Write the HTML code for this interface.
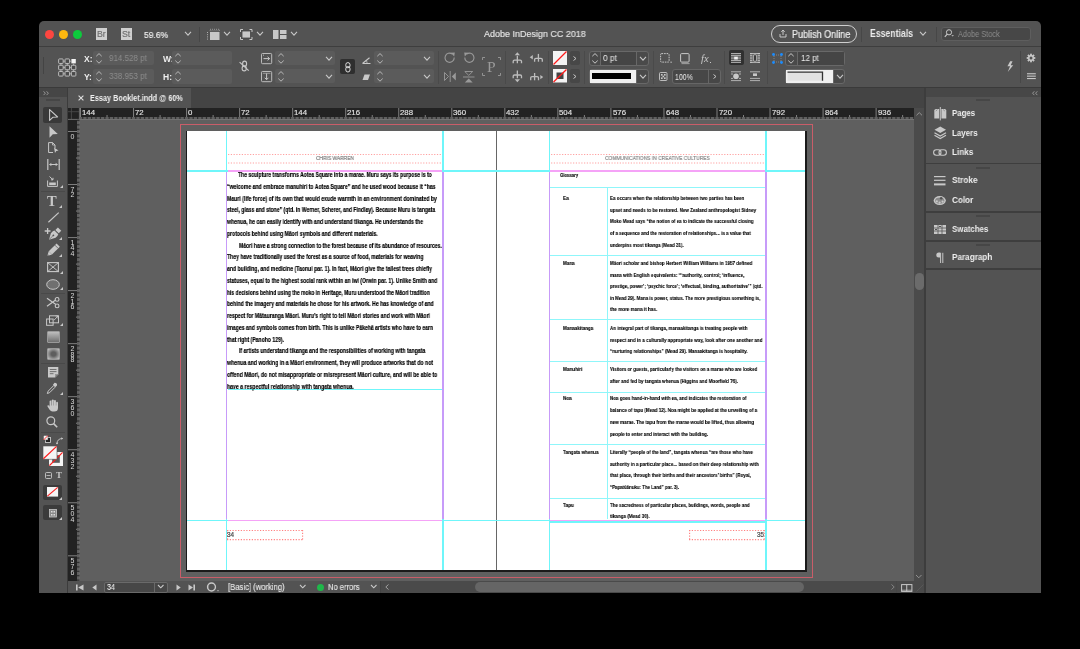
<!DOCTYPE html><html><head><meta charset="utf-8"><style>
html,body{margin:0;padding:0;background:#000;width:1080px;height:649px;overflow:hidden;font-family:'Liberation Sans',sans-serif}
.t{position:absolute;white-space:nowrap;will-change:transform;font-family:'Liberation Sans',sans-serif}
svg{overflow:visible}
</style></head><body>
<div style="position:absolute;left:39px;top:21px;width:1002px;height:572px;background:#535353;border-radius:5px 5px 0 0;"></div>
<div style="position:absolute;left:39px;top:46px;width:1002px;height:1px;background:#3e3e3e;"></div>
<div style="position:absolute;left:39px;top:87px;width:1002px;height:1px;background:#3a3a3a;"></div>
<div style="position:absolute;left:68px;top:88px;width:858px;height:20px;background:#444444;"></div>
<div style="position:absolute;left:68px;top:88px;width:123px;height:20px;background:#535353;"></div>
<div style="position:absolute;left:39px;top:88px;width:28px;height:505px;background:#535353;"></div>
<div style="position:absolute;left:39px;top:88px;width:28px;height:9px;background:#464646;"></div>
<div style="position:absolute;left:67px;top:88px;width:1px;height:505px;background:#3c3c3c;"></div>
<div style="position:absolute;left:68px;top:108px;width:846px;height:11px;background:#222222;"></div>
<div style="position:absolute;left:68px;top:119px;width:12px;height:462px;background:#222222;"></div>
<div style="position:absolute;left:80px;top:119px;width:834px;height:462px;background:#5f5f5f;"></div>
<div style="position:absolute;left:914px;top:108px;width:10px;height:473px;background:#4b4b4b;"></div>
<div style="position:absolute;left:924px;top:88px;width:2px;height:505px;background:#3d3d3d;"></div>
<div style="position:absolute;left:926px;top:88px;width:115px;height:9px;background:#474747;"></div>
<div style="position:absolute;left:68px;top:581px;width:313px;height:12px;background:#535353;"></div>
<div style="position:absolute;left:381px;top:581px;width:533px;height:12px;background:#4a4a4a;"></div>
<div style="position:absolute;left:914px;top:581px;width:10px;height:12px;background:#4a4a4a;"></div>
<div style="position:absolute;left:44.699999999999996px;top:30.1px;width:9.2px;height:9.2px;border-radius:50%;background:#fd4640;"></div>
<div style="position:absolute;left:58.8px;top:30.1px;width:9.2px;height:9.2px;border-radius:50%;background:#fdb810;"></div>
<div style="position:absolute;left:72.5px;top:30.1px;width:9.2px;height:9.2px;border-radius:50%;background:#0ccb3c;"></div>
<div style="position:absolute;left:95.8px;top:28.1px;width:11.4px;height:11.7px;background:#cfcfcf;"></div>
<div class="t " style="left:97.0px;top:30.15px;font-size:8.8px;line-height:8.8px;color:#6e6e6e;font-weight:normal;font-family:'Liberation Sans',sans-serif;-webkit-text-stroke:0.15px #6e6e6e;">Br</div>
<div style="position:absolute;left:120.9px;top:28.1px;width:11.4px;height:11.7px;background:#cfcfcf;"></div>
<div class="t " style="left:122.10000000000001px;top:30.15px;font-size:8.8px;line-height:8.8px;color:#6e6e6e;font-weight:normal;font-family:'Liberation Sans',sans-serif;-webkit-text-stroke:0.15px #6e6e6e;">St</div>
<div id="f0" class="t" style="left:144.2px;top:30.42px;font-size:9.9px;line-height:9.9px;color:#ececec;font-weight:normal;font-family:'Liberation Sans',sans-serif;transform:scaleX(0.8602);transform-origin:0 0;-webkit-text-stroke:0.2px #ececec;">59.6%</div>
<svg style="position:absolute;left:184.0px;top:31.1px;" width="8" height="5.2" viewBox="0 0 8 5.2"><polyline points="1,1 4.0,4.2 7,1" fill="none" stroke="#c8c8c8" stroke-width="1.1"/></svg>
<div style="position:absolute;left:199px;top:27px;width:1px;height:15px;background:#474747;"></div>
<svg style="position:absolute;left:206px;top:28.7px;" width="14" height="11" viewBox="0 0 14 11"><rect x="4" y="3" width="9.5" height="8" fill="#c8c8c8"/><rect x="4" y="0.3" width="9.5" height="1.5" fill="none" stroke="#c8c8c8" stroke-width="0.6" stroke-dasharray="1 1"/><line x1="1.5" y1="3" x2="1.5" y2="11" stroke="#c8c8c8" stroke-width="0.8" stroke-dasharray="1 1.2"/></svg>
<svg style="position:absolute;left:223.3px;top:31.1px;" width="8" height="5.2" viewBox="0 0 8 5.2"><polyline points="1,1 4.0,4.2 7,1" fill="none" stroke="#c8c8c8" stroke-width="1.1"/></svg>
<svg style="position:absolute;left:240px;top:28.7px;" width="12.5" height="11" viewBox="0 0 12.5 11"><rect x="2" y="2" width="8.5" height="7" fill="#c8c8c8" stroke="#444" stroke-width="0.8"/><path d="M0.5 3V0.5H3M9.5 0.5H12V3M12 8V10.5H9.5M3 10.5H0.5V8" fill="none" stroke="#c8c8c8" stroke-width="1"/></svg>
<svg style="position:absolute;left:256.4px;top:31.1px;" width="8" height="5.2" viewBox="0 0 8 5.2"><polyline points="1,1 4.0,4.2 7,1" fill="none" stroke="#c8c8c8" stroke-width="1.1"/></svg>
<svg style="position:absolute;left:272.7px;top:29.6px;" width="13.5" height="9" viewBox="0 0 13.5 9"><rect x="0" y="0" width="5.5" height="9" fill="#c8c8c8"/><rect x="7" y="0" width="6.5" height="4" fill="#c8c8c8"/><rect x="7" y="5" width="6.5" height="4" fill="#c8c8c8"/></svg>
<svg style="position:absolute;left:290.3px;top:31.1px;" width="8" height="5.2" viewBox="0 0 8 5.2"><polyline points="1,1 4.0,4.2 7,1" fill="none" stroke="#c8c8c8" stroke-width="1.1"/></svg>
<div id="f1" class="t" style="left:484.3px;top:29.98px;font-size:9px;line-height:9px;color:#e4e4e4;font-weight:normal;font-family:'Liberation Sans',sans-serif;transform:scaleX(0.9973);transform-origin:0 0;-webkit-text-stroke:0.15px #e4e4e4;">Adobe InDesign CC 2018</div>
<div style="position:absolute;left:771.3px;top:24.7px;width:83.4px;height:16.3px;border:1px solid #cfcfcf;border-radius:9px;"></div>
<svg style="position:absolute;left:779px;top:29px;" width="8" height="9" viewBox="0 0 8 9"><path d="M1 5V8H7V5" fill="none" stroke="#c8c8c8" stroke-width="1"/><path d="M4 6V1M2.3 2.8L4 1L5.7 2.8" fill="none" stroke="#c8c8c8" stroke-width="1"/></svg>
<div id="f2" class="t" style="left:791.7px;top:29.93px;font-size:10px;line-height:10px;color:#ececec;font-weight:normal;font-family:'Liberation Sans',sans-serif;transform:scaleX(0.9041);transform-origin:0 0;-webkit-text-stroke:0.2px #ececec;">Publish Online</div>
<div style="position:absolute;left:860.5px;top:27px;width:1px;height:15px;background:#474747;"></div>
<div id="f3" class="t" style="left:870px;top:29.43px;font-size:10px;line-height:10px;color:#ececec;font-weight:bold;font-family:'Liberation Sans',sans-serif;transform:scaleX(0.8690);transform-origin:0 0;">Essentials</div>
<svg style="position:absolute;left:918.5px;top:31.1px;" width="8" height="5.2" viewBox="0 0 8 5.2"><polyline points="1,1 4.0,4.2 7,1" fill="none" stroke="#c8c8c8" stroke-width="1.1"/></svg>
<div style="position:absolute;left:935.5px;top:27px;width:1px;height:15px;background:#474747;"></div>
<div style="position:absolute;left:940.6px;top:27.4px;width:88px;height:11.4px;background:#474747;border:1px solid #5e5e5e;border-radius:3px;"></div>
<svg style="position:absolute;left:944px;top:29px;" width="10" height="9" viewBox="0 0 10 9"><circle cx="5" cy="3.3" r="2.6" fill="none" stroke="#c8c8c8" stroke-width="1"/><line x1="3.2" y1="5.2" x2="0.8" y2="7.8" stroke="#c8c8c8" stroke-width="1.2"/><path d="M7.3 6.2H10L8.65 7.6Z" fill="#c8c8c8"/></svg>
<div id="f4" class="t" style="left:958.3px;top:29.58px;font-size:9px;line-height:9px;color:#8c8c8c;font-weight:normal;font-family:'Liberation Sans',sans-serif;transform:scaleX(0.8169);transform-origin:0 0;">Adobe Stock</div>
<div style="position:absolute;left:42.5px;top:57px;width:1.2px;height:17px;background:#444;"></div>
<svg style="position:absolute;left:57.9px;top:57.8px;" width="19" height="19" viewBox="0 0 19 19"><rect x="0.6499999999999986" y="0.9500000000000028" width="4.5" height="4.5" rx="0.7" fill="#4a4a4a" stroke="#c8c8c8" stroke-width="0.9"/><rect x="0.6499999999999986" y="7.25" width="4.5" height="4.5" rx="0.7" fill="#4a4a4a" stroke="#c8c8c8" stroke-width="0.9"/><rect x="0.6499999999999986" y="13.549999999999997" width="4.5" height="4.5" rx="0.7" fill="#4a4a4a" stroke="#c8c8c8" stroke-width="0.9"/><rect x="7.050000000000004" y="0.9500000000000028" width="4.5" height="4.5" rx="0.7" fill="#4a4a4a" stroke="#c8c8c8" stroke-width="0.9"/><rect x="7.050000000000004" y="7.25" width="4.5" height="4.5" rx="0.7" fill="#4a4a4a" stroke="#c8c8c8" stroke-width="0.9"/><rect x="7.050000000000004" y="13.549999999999997" width="4.5" height="4.5" rx="0.7" fill="#4a4a4a" stroke="#c8c8c8" stroke-width="0.9"/><rect x="13.400000000000002" y="1.0000000000000027" width="4.4" height="4.4" fill="#f4f4f4"/><rect x="13.350000000000001" y="7.25" width="4.5" height="4.5" rx="0.7" fill="#4a4a4a" stroke="#c8c8c8" stroke-width="0.9"/><rect x="13.350000000000001" y="13.549999999999997" width="4.5" height="4.5" rx="0.7" fill="#4a4a4a" stroke="#c8c8c8" stroke-width="0.9"/><line x1="5.299999999999999" y1="3.200000000000003" x2="6.900000000000004" y2="3.200000000000003" stroke="#c8c8c8" stroke-width="0.7"/><line x1="11.700000000000005" y1="3.200000000000003" x2="13.200000000000001" y2="3.200000000000003" stroke="#c8c8c8" stroke-width="0.7"/><line x1="5.299999999999999" y1="9.5" x2="6.900000000000004" y2="9.5" stroke="#c8c8c8" stroke-width="0.7"/><line x1="11.700000000000005" y1="9.5" x2="13.200000000000001" y2="9.5" stroke="#c8c8c8" stroke-width="0.7"/><line x1="5.299999999999999" y1="15.799999999999997" x2="6.900000000000004" y2="15.799999999999997" stroke="#c8c8c8" stroke-width="0.7"/><line x1="11.700000000000005" y1="15.799999999999997" x2="13.200000000000001" y2="15.799999999999997" stroke="#c8c8c8" stroke-width="0.7"/><line x1="2.8999999999999986" y1="5.600000000000003" x2="2.8999999999999986" y2="7.1" stroke="#c8c8c8" stroke-width="0.7"/><line x1="2.8999999999999986" y1="11.9" x2="2.8999999999999986" y2="13.399999999999997" stroke="#c8c8c8" stroke-width="0.7"/><line x1="9.300000000000004" y1="5.600000000000003" x2="9.300000000000004" y2="7.1" stroke="#c8c8c8" stroke-width="0.7"/><line x1="9.300000000000004" y1="11.9" x2="9.300000000000004" y2="13.399999999999997" stroke="#c8c8c8" stroke-width="0.7"/><line x1="15.600000000000001" y1="5.600000000000003" x2="15.600000000000001" y2="7.1" stroke="#c8c8c8" stroke-width="0.7"/><line x1="15.600000000000001" y1="11.9" x2="15.600000000000001" y2="13.399999999999997" stroke="#c8c8c8" stroke-width="0.7"/></svg>
<div class="t " style="left:84.1px;top:55.00px;font-size:8.5px;line-height:8.5px;color:#eeeeee;font-weight:bold;font-family:'Liberation Sans',sans-serif;">X:</div>
<div class="t " style="left:84.1px;top:72.80px;font-size:8.5px;line-height:8.5px;color:#eeeeee;font-weight:bold;font-family:'Liberation Sans',sans-serif;">Y:</div>
<div style="position:absolute;left:93px;top:51.1px;width:60.8px;height:14.1px;background:#5b5b5b;border-radius:2px;"></div>
<div style="position:absolute;left:93px;top:68.9px;width:60.8px;height:14.8px;background:#5b5b5b;border-radius:2px;"></div>
<svg style="position:absolute;left:96.2px;top:52.7px;" width="6" height="11" viewBox="0 0 6 11"><polyline points="0.3,3.2 3,0.6 5.7,3.2" fill="none" stroke="#bdbdbd" stroke-width="0.95"/><polyline points="0.3,7.6 3,10.2 5.7,7.6" fill="none" stroke="#bdbdbd" stroke-width="0.95"/></svg>
<svg style="position:absolute;left:96.2px;top:70.8px;" width="6" height="11" viewBox="0 0 6 11"><polyline points="0.3,3.2 3,0.6 5.7,3.2" fill="none" stroke="#bdbdbd" stroke-width="0.95"/><polyline points="0.3,7.6 3,10.2 5.7,7.6" fill="none" stroke="#bdbdbd" stroke-width="0.95"/></svg>
<div id="f5" class="t" style="left:108.6px;top:54.02px;font-size:8.6px;line-height:8.6px;color:#8d8d8d;font-weight:normal;font-family:'Liberation Sans',sans-serif;transform:scaleX(0.9305);transform-origin:0 0;">914.528 pt</div>
<div id="f6" class="t" style="left:108.6px;top:72.12px;font-size:8.6px;line-height:8.6px;color:#8d8d8d;font-weight:normal;font-family:'Liberation Sans',sans-serif;transform:scaleX(0.9305);transform-origin:0 0;">338.953 pt</div>
<div class="t " style="left:162.7px;top:55.00px;font-size:8.5px;line-height:8.5px;color:#eeeeee;font-weight:bold;font-family:'Liberation Sans',sans-serif;">W:</div>
<div class="t " style="left:162.7px;top:72.80px;font-size:8.5px;line-height:8.5px;color:#eeeeee;font-weight:bold;font-family:'Liberation Sans',sans-serif;">H:</div>
<div style="position:absolute;left:172px;top:51.1px;width:60.3px;height:14.1px;background:#5b5b5b;border-radius:2px;"></div>
<div style="position:absolute;left:172px;top:68.9px;width:60.3px;height:14.8px;background:#5b5b5b;border-radius:2px;"></div>
<svg style="position:absolute;left:174.8px;top:52.7px;" width="6" height="11" viewBox="0 0 6 11"><polyline points="0.3,3.2 3,0.6 5.7,3.2" fill="none" stroke="#bdbdbd" stroke-width="0.95"/><polyline points="0.3,7.6 3,10.2 5.7,7.6" fill="none" stroke="#bdbdbd" stroke-width="0.95"/></svg>
<svg style="position:absolute;left:174.8px;top:70.8px;" width="6" height="11" viewBox="0 0 6 11"><polyline points="0.3,3.2 3,0.6 5.7,3.2" fill="none" stroke="#bdbdbd" stroke-width="0.95"/><polyline points="0.3,7.6 3,10.2 5.7,7.6" fill="none" stroke="#bdbdbd" stroke-width="0.95"/></svg>
<svg style="position:absolute;left:238px;top:59px;" width="12" height="14" viewBox="0 0 12 14"><ellipse cx="6.6" cy="4.7" rx="2" ry="2.6" fill="none" stroke="#c8c8c8" stroke-width="1.1"/><ellipse cx="6.2" cy="9.4" rx="2.1" ry="2.5" fill="none" stroke="#c8c8c8" stroke-width="1.1"/><line x1="1.6" y1="3.1" x2="10.7" y2="11.6" stroke="#c8c8c8" stroke-width="1.2"/></svg>
<svg style="position:absolute;left:261px;top:52.8px;" width="11.2" height="11.2" viewBox="0 0 11.2 11.2"><rect x="0.5" y="0.5" width="10.2" height="10.2" rx="1" fill="none" stroke="#c8c8c8" stroke-width="0.9"/><path d="M2.5 5.6H8.5M6.6 3.8L8.6 5.6L6.6 7.4" fill="none" stroke="#c8c8c8" stroke-width="1"/><line x1="2.5" y1="1.5" x2="2.5" y2="3" stroke="#c8c8c8" stroke-width="0.6"/></svg>
<svg style="position:absolute;left:261px;top:71.1px;" width="11.2" height="11.2" viewBox="0 0 11.2 11.2"><rect x="0.5" y="0.5" width="10.2" height="10.2" rx="1" fill="none" stroke="#c8c8c8" stroke-width="0.9"/><path d="M5.6 2.5V8.7M3.8 6.8L5.6 8.7L7.4 6.8" fill="none" stroke="#c8c8c8" stroke-width="1"/><line x1="1.8" y1="2.3" x2="9.4" y2="2.3" stroke="#c8c8c8" stroke-width="0.6"/></svg>
<div style="position:absolute;left:275.1px;top:51.1px;width:60.3px;height:14.2px;background:#5b5b5b;border-radius:2px;"></div>
<div style="position:absolute;left:275.1px;top:69.1px;width:60.3px;height:14px;background:#5b5b5b;border-radius:2px;"></div>
<svg style="position:absolute;left:277.8px;top:52.7px;" width="6" height="11" viewBox="0 0 6 11"><polyline points="0.3,3.2 3,0.6 5.7,3.2" fill="none" stroke="#bdbdbd" stroke-width="0.95"/><polyline points="0.3,7.6 3,10.2 5.7,7.6" fill="none" stroke="#bdbdbd" stroke-width="0.95"/></svg>
<svg style="position:absolute;left:277.8px;top:70.6px;" width="6" height="11" viewBox="0 0 6 11"><polyline points="0.3,3.2 3,0.6 5.7,3.2" fill="none" stroke="#bdbdbd" stroke-width="0.95"/><polyline points="0.3,7.6 3,10.2 5.7,7.6" fill="none" stroke="#bdbdbd" stroke-width="0.95"/></svg>
<svg style="position:absolute;left:325.0px;top:55.8px;" width="8" height="5.2" viewBox="0 0 8 5.2"><polyline points="1,1 4.0,4.2 7,1" fill="none" stroke="#c8c8c8" stroke-width="1.1"/></svg>
<svg style="position:absolute;left:325.0px;top:73.80000000000001px;" width="8" height="5.2" viewBox="0 0 8 5.2"><polyline points="1,1 4.0,4.2 7,1" fill="none" stroke="#c8c8c8" stroke-width="1.1"/></svg>
<div style="position:absolute;left:339.9px;top:59.1px;width:14.8px;height:15.1px;background:#2f2f2f;border-radius:2px;"></div>
<svg style="position:absolute;left:344.5px;top:61.5px;" width="6" height="11" viewBox="0 0 6 11"><rect x="0.8" y="0.6" width="4.2" height="5.2" rx="2.1" fill="none" stroke="#e0e0e0" stroke-width="1"/><rect x="0.8" y="4.6" width="4.2" height="5.4" rx="2.1" fill="none" stroke="#e0e0e0" stroke-width="1"/></svg>
<svg style="position:absolute;left:361.5px;top:56.5px;" width="9" height="7" viewBox="0 0 9 7"><path d="M0.5 6.5H8.5M0.5 6.5L7.5 0.8" fill="none" stroke="#c8c8c8" stroke-width="1.1"/><path d="M4.2 3.5 Q5.3 4.8 5 6.5" fill="none" stroke="#c8c8c8" stroke-width="0.8"/></svg>
<svg style="position:absolute;left:361.5px;top:73.8px;" width="8.5" height="6.5" viewBox="0 0 8.5 6.5"><path d="M2.5 0.5H8L6 6H0.5Z" fill="#c8c8c8"/></svg>
<div style="position:absolute;left:373.8px;top:51.1px;width:60px;height:14.2px;background:#5b5b5b;border-radius:2px;"></div>
<div style="position:absolute;left:373.8px;top:69.1px;width:60px;height:14px;background:#5b5b5b;border-radius:2px;"></div>
<svg style="position:absolute;left:376.8px;top:52.7px;" width="6" height="11" viewBox="0 0 6 11"><polyline points="0.3,3.2 3,0.6 5.7,3.2" fill="none" stroke="#bdbdbd" stroke-width="0.95"/><polyline points="0.3,7.6 3,10.2 5.7,7.6" fill="none" stroke="#bdbdbd" stroke-width="0.95"/></svg>
<svg style="position:absolute;left:376.8px;top:70.6px;" width="6" height="11" viewBox="0 0 6 11"><polyline points="0.3,3.2 3,0.6 5.7,3.2" fill="none" stroke="#bdbdbd" stroke-width="0.95"/><polyline points="0.3,7.6 3,10.2 5.7,7.6" fill="none" stroke="#bdbdbd" stroke-width="0.95"/></svg>
<svg style="position:absolute;left:423.3px;top:55.8px;" width="8" height="5.2" viewBox="0 0 8 5.2"><polyline points="1,1 4.0,4.2 7,1" fill="none" stroke="#c8c8c8" stroke-width="1.1"/></svg>
<svg style="position:absolute;left:423.3px;top:73.80000000000001px;" width="8" height="5.2" viewBox="0 0 8 5.2"><polyline points="1,1 4.0,4.2 7,1" fill="none" stroke="#c8c8c8" stroke-width="1.1"/></svg>
<div style="position:absolute;left:438px;top:51px;width:1px;height:33px;background:#4a4a4a;"></div>
<svg style="position:absolute;left:444px;top:52px;" width="12" height="12" viewBox="0 0 12 12"><path d="M10.2 5.5 A4.6 4.6 0 1 1 8.3 2" fill="none" stroke="#9a9a9a" stroke-width="1.1"/><path d="M6.8 0.8 L10.8 0.6 L10.2 4.4Z" fill="#9a9a9a"/></svg>
<svg style="position:absolute;left:463px;top:52px;" width="12" height="12" viewBox="0 0 12 12"><path d="M1.8 5.5 A4.6 4.6 0 1 0 3.7 2" fill="none" stroke="#9a9a9a" stroke-width="1.1"/><path d="M5.2 0.8 L1.2 0.6 L1.8 4.4Z" fill="#9a9a9a"/></svg>
<svg style="position:absolute;left:443.8px;top:71.2px;" width="12.5" height="11" viewBox="0 0 12.5 11"><path d="M0.5 1.5L4.5 5.5L0.5 9.5Z" fill="none" stroke="#9a9a9a" stroke-width="0.9"/><path d="M11.8 1.5L7.8 5.5L11.8 9.5Z" fill="#9a9a9a"/><line x1="6.2" y1="0" x2="6.2" y2="11" stroke="#9a9a9a" stroke-width="0.9"/></svg>
<svg style="position:absolute;left:463px;top:70.5px;" width="11.5" height="12" viewBox="0 0 11.5 12"><path d="M1.8 0.5H9.7L5.75 4.4Z" fill="none" stroke="#9a9a9a" stroke-width="0.9"/><path d="M1.8 11.5H9.7L5.75 7.6Z" fill="#9a9a9a"/><line x1="0" y1="6" x2="11.5" y2="6" stroke="#9a9a9a" stroke-width="0.9"/></svg>
<svg style="position:absolute;left:482.3px;top:57.3px;" width="19" height="19" viewBox="0 0 19 19"><path d="M0.5 3V0.5H3M16 0.5H18.5V3M18.5 16V18.5H16M3 18.5H0.5V16" fill="none" stroke="#9a9a9a" stroke-width="0.9"/></svg>
<div class="t " style="left:486.6px;top:59.28px;font-size:15.5px;line-height:15.5px;color:#9a9a9a;font-weight:normal;font-family:'Liberation Serif',sans-serif;">P</div>
<div style="position:absolute;left:505.2px;top:51px;width:1px;height:33px;background:#4a4a4a;"></div>
<svg style="position:absolute;left:510px;top:50px;" width="36" height="36" viewBox="0 0 36 36"><polygon points="4.70,5.20 10.00,5.20 7.35,2.20" fill="#bdbdbd"/><line x1="7.350000000000023" y1="5.799999999999997" x2="7.350000000000023" y2="9.799999999999997" stroke="#bdbdbd" stroke-width="1.3"/><g transform="translate(-510,-50)"><path d="M513.2 63.3 V61.2 Q513.2 60.2 514.5 60.2 H520.2 Q521.5 60.2 521.5 61.2 V63.3" fill="none" stroke="#bdbdbd" stroke-width="1.3"/><line x1="517.35" y1="59.6" x2="517.35" y2="63.3" stroke="#bdbdbd" stroke-width="1.3"/></g><polygon points="22.80,4.90 22.80,9.50 19.70,7.20" fill="#bdbdbd"/><line x1="28.399999999999977" y1="3.8999999999999986" x2="28.399999999999977" y2="8" stroke="#bdbdbd" stroke-width="1.3"/><g transform="translate(-510,-50)"><path d="M534.6 61.7 V59.4 Q534.6 58.4 535.9 58.4 H541 Q542.3 58.4 542.3 59.4 V61.7" fill="none" stroke="#bdbdbd" stroke-width="1.3"/><line x1="538.45" y1="57.8" x2="538.45" y2="61.7" stroke="#bdbdbd" stroke-width="1.3"/></g><line x1="7.350000000000023" y1="20.599999999999994" x2="7.350000000000023" y2="24.599999999999994" stroke="#bdbdbd" stroke-width="1.3"/><g transform="translate(-510,-50)"><path d="M513.2 78.3 V76.0 Q513.2 75.0 514.5 75.0 H520.2 Q521.5 75.0 521.5 76.0 V78.3" fill="none" stroke="#bdbdbd" stroke-width="1.3"/><line x1="517.35" y1="74.4" x2="517.35" y2="78.3" stroke="#bdbdbd" stroke-width="1.3"/></g><polygon points="4.70,29.20 10.00,29.20 7.35,32.20" fill="#bdbdbd"/><line x1="24.600000000000023" y1="23" x2="24.600000000000023" y2="26.299999999999997" stroke="#bdbdbd" stroke-width="1.3"/><g transform="translate(-510,-50)"><path d="M530.7 80.3 V77.69999999999999 Q530.7 76.69999999999999 532 76.69999999999999 H537.2 Q538.5 76.69999999999999 538.5 77.69999999999999 V80.3" fill="none" stroke="#bdbdbd" stroke-width="1.3"/><line x1="534.6" y1="76.1" x2="534.6" y2="80.3" stroke="#bdbdbd" stroke-width="1.3"/></g><polygon points="30.30,25.00 30.30,29.20 33.20,27.10" fill="#bdbdbd"/></svg>
<div style="position:absolute;left:548px;top:51px;width:1px;height:33px;background:#4a4a4a;"></div>
<svg style="position:absolute;left:552.9px;top:51.1px;" width="14" height="14" viewBox="0 0 14 14"><rect x="0" y="0" width="14" height="14" fill="#f4f4f4"/><line x1="0.5" y1="13.5" x2="13.5" y2="0.5" stroke="#ff1b1b" stroke-width="1.3"/></svg>
<svg style="position:absolute;left:552.9px;top:69.4px;" width="14" height="13.5" viewBox="0 0 14 13.5"><rect x="0" y="0" width="14" height="13.5" fill="#f4f4f4"/><rect x="3.5" y="3.5" width="7" height="6.5" fill="#444"/><line x1="0.5" y1="13" x2="13.5" y2="0.5" stroke="#ff1b1b" stroke-width="1.3"/></svg>
<div style="position:absolute;left:569.9px;top:51.1px;width:10.5px;height:13.9px;background:#474747;border-radius:2px;"></div>
<svg style="position:absolute;left:573.3px;top:55.6px;" width="4" height="5" viewBox="0 0 4 5"><polyline points="0.5,0.5 3,2.5 0.5,4.5" fill="none" stroke="#c8c8c8" stroke-width="1"/></svg>
<div style="position:absolute;left:569.9px;top:69.4px;width:10.5px;height:13.9px;background:#474747;border-radius:2px;"></div>
<svg style="position:absolute;left:573.3px;top:73.9px;" width="4" height="5" viewBox="0 0 4 5"><polyline points="0.5,0.5 3,2.5 0.5,4.5" fill="none" stroke="#c8c8c8" stroke-width="1"/></svg>
<div style="position:absolute;left:584.3px;top:51px;width:1px;height:33px;background:#4a4a4a;"></div>
<div style="position:absolute;left:588.8px;top:50.6px;width:58.5px;height:13px;border:1px solid #686868;border-radius:3px;background:#4a4a4a;"></div>
<div style="position:absolute;left:600.3px;top:51.6px;width:1px;height:13px;background:#686868;"></div>
<div style="position:absolute;left:601.3px;top:51.6px;width:35px;height:13px;background:#454545;"></div>
<div style="position:absolute;left:636.3px;top:51.6px;width:1px;height:13px;background:#686868;"></div>
<svg style="position:absolute;left:591.6px;top:52.7px;" width="6" height="11" viewBox="0 0 6 11"><polyline points="0.3,3.2 3,0.6 5.7,3.2" fill="none" stroke="#cfcfcf" stroke-width="0.95"/><polyline points="0.3,7.6 3,10.2 5.7,7.6" fill="none" stroke="#cfcfcf" stroke-width="0.95"/></svg>
<div id="f7" class="t" style="left:603.2px;top:54.45px;font-size:8.8px;line-height:8.8px;color:#ececec;font-weight:normal;font-family:'Liberation Sans',sans-serif;transform:scaleX(0.9464);transform-origin:0 0;">0 pt</div>
<svg style="position:absolute;left:639.0px;top:55.5px;" width="8" height="5.2" viewBox="0 0 8 5.2"><polyline points="1,1 4.0,4.2 7,1" fill="none" stroke="#c8c8c8" stroke-width="1.1"/></svg>
<div style="position:absolute;left:588.8px;top:69.1px;width:58.5px;height:12.5px;border:1px solid #686868;border-radius:3px;background:#4a4a4a;"></div>
<div style="position:absolute;left:589.8px;top:70.1px;width:46.5px;height:12.5px;background:#f0f0f0;"></div>
<div style="position:absolute;left:592px;top:73.2px;width:39px;height:5.5px;background:#000;"></div>
<div style="position:absolute;left:636.3px;top:70.1px;width:1px;height:12.5px;background:#686868;"></div>
<svg style="position:absolute;left:639.0px;top:73.80000000000001px;" width="8" height="5.2" viewBox="0 0 8 5.2"><polyline points="1,1 4.0,4.2 7,1" fill="none" stroke="#c8c8c8" stroke-width="1.1"/></svg>
<div style="position:absolute;left:653.2px;top:51px;width:1px;height:33px;background:#4a4a4a;"></div>
<svg style="position:absolute;left:659.8px;top:53.2px;" width="12" height="10.5" viewBox="0 0 12 10.5"><rect x="0.6" y="0.6" width="8.5" height="8.5" rx="1" fill="none" stroke="#c8c8c8" stroke-width="1" stroke-dasharray="1.6 0.9"/><rect x="10.5" y="8.6" width="1.2" height="1.2" fill="#c8c8c8"/></svg>
<svg style="position:absolute;left:680.2px;top:53px;" width="10" height="11.5" viewBox="0 0 10 11.5"><rect x="0.6" y="0.6" width="8.5" height="8.5" rx="1" fill="none" stroke="#c8c8c8" stroke-width="1"/><line x1="1.5" y1="10.6" x2="9.6" y2="10.6" stroke="#9a9a9a" stroke-width="1.1"/></svg>
<div class="t " style="left:700.6px;top:53.51px;font-size:10.5px;line-height:10.5px;color:#c8c8c8;font-weight:normal;font-family:'Liberation Serif',sans-serif;"><i>fx</i></div>
<div style="position:absolute;left:710px;top:61.5px;width:1.2px;height:1.2px;background:#c8c8c8;"></div>
<svg style="position:absolute;left:659.2px;top:71.8px;" width="8.5" height="9" viewBox="0 0 8.5 9"><rect x="0.5" y="0.5" width="7.5" height="8" rx="1" fill="none" stroke="#c8c8c8" stroke-width="0.9"/><rect x="2" y="2" width="1.6" height="1.6" fill="#c8c8c8"/><rect x="5" y="2" width="1.6" height="1.6" fill="#c8c8c8"/><rect x="3.5" y="3.7" width="1.6" height="1.6" fill="#c8c8c8"/><rect x="2" y="5.4" width="1.6" height="1.6" fill="#c8c8c8"/><rect x="5" y="5.4" width="1.6" height="1.6" fill="#c8c8c8"/></svg>
<div style="position:absolute;left:671.6px;top:69.1px;width:47.8px;height:13.2px;border:1px solid #666;border-radius:3px;background:#474747;"></div>
<div style="position:absolute;left:707.6px;top:70.1px;width:1px;height:13.2px;background:#666;"></div>
<div id="f8" class="t" style="left:674.9px;top:72.55px;font-size:8.8px;line-height:8.8px;color:#ececec;font-weight:normal;font-family:'Liberation Sans',sans-serif;transform:scaleX(0.7911);transform-origin:0 0;">100%</div>
<svg style="position:absolute;left:712.5px;top:73.8px;" width="4" height="5" viewBox="0 0 4 5"><polyline points="0.5,0.5 3,2.5 0.5,4.5" fill="none" stroke="#c8c8c8" stroke-width="1"/></svg>
<div style="position:absolute;left:724.3px;top:51px;width:1px;height:33px;background:#4a4a4a;"></div>
<div style="position:absolute;left:728.8px;top:50px;width:15px;height:15.3px;background:#303030;border-radius:2px;"></div>
<svg style="position:absolute;left:731.2px;top:52.8px;" width="10" height="10" viewBox="0 0 10 10"><line x1="0" y1="0.6" x2="10" y2="0.6" stroke="#c8c8c8" stroke-width="0.9"/><line x1="0" y1="2.35" x2="10" y2="2.35" stroke="#c8c8c8" stroke-width="0.9"/><line x1="0" y1="4.1" x2="10" y2="4.1" stroke="#c8c8c8" stroke-width="0.9"/><line x1="0" y1="5.85" x2="10" y2="5.85" stroke="#c8c8c8" stroke-width="0.9"/><line x1="0" y1="7.6" x2="10" y2="7.6" stroke="#c8c8c8" stroke-width="0.9"/><line x1="0" y1="9.35" x2="10" y2="9.35" stroke="#c8c8c8" stroke-width="0.9"/><rect x="3.2" y="3.7" width="3.6" height="2.8" fill="#f0f0f0"/></svg>
<svg style="position:absolute;left:750px;top:52.8px;" width="10" height="10" viewBox="0 0 10 10"><line x1="0" y1="0.6" x2="2.4" y2="0.6" stroke="#c8c8c8" stroke-width="0.9"/><line x1="7.6" y1="0.6" x2="10" y2="0.6" stroke="#c8c8c8" stroke-width="0.9"/><line x1="0" y1="2.35" x2="2.4" y2="2.35" stroke="#c8c8c8" stroke-width="0.9"/><line x1="7.6" y1="2.35" x2="10" y2="2.35" stroke="#c8c8c8" stroke-width="0.9"/><line x1="0" y1="4.1" x2="2.4" y2="4.1" stroke="#c8c8c8" stroke-width="0.9"/><line x1="7.6" y1="4.1" x2="10" y2="4.1" stroke="#c8c8c8" stroke-width="0.9"/><line x1="0" y1="5.85" x2="2.4" y2="5.85" stroke="#c8c8c8" stroke-width="0.9"/><line x1="7.6" y1="5.85" x2="10" y2="5.85" stroke="#c8c8c8" stroke-width="0.9"/><line x1="0" y1="7.6" x2="2.4" y2="7.6" stroke="#c8c8c8" stroke-width="0.9"/><line x1="7.6" y1="7.6" x2="10" y2="7.6" stroke="#c8c8c8" stroke-width="0.9"/><line x1="0" y1="9.35" x2="2.4" y2="9.35" stroke="#c8c8c8" stroke-width="0.9"/><line x1="7.6" y1="9.35" x2="10" y2="9.35" stroke="#c8c8c8" stroke-width="0.9"/><line x1="0" y1="0.6" x2="10" y2="0.6" stroke="#c8c8c8" stroke-width="0.9"/><line x1="0" y1="9.35" x2="10" y2="9.35" stroke="#c8c8c8" stroke-width="0.9"/><rect x="3.3" y="1.8" width="3.4" height="6.4" rx="1" fill="#3a3a3a" stroke="#c8c8c8" stroke-width="0.9"/></svg>
<svg style="position:absolute;left:731.2px;top:71px;" width="10" height="10.5" viewBox="0 0 10 10.5"><line x1="0" y1="0.8" x2="10" y2="0.8" stroke="#c8c8c8" stroke-width="0.8"/><line x1="0" y1="9.6" x2="10" y2="9.6" stroke="#c8c8c8" stroke-width="0.8"/><line x1="0" y1="3" x2="2" y2="3" stroke="#c8c8c8" stroke-width="0.8"/><line x1="8" y1="3" x2="10" y2="3" stroke="#c8c8c8" stroke-width="0.8"/><line x1="0" y1="7.4" x2="2" y2="7.4" stroke="#c8c8c8" stroke-width="0.8"/><line x1="8" y1="7.4" x2="10" y2="7.4" stroke="#c8c8c8" stroke-width="0.8"/><circle cx="5" cy="5.2" r="2.8" fill="#c8c8c8"/></svg>
<svg style="position:absolute;left:750px;top:71px;" width="10" height="10.5" viewBox="0 0 10 10.5"><line x1="0" y1="0.8" x2="10" y2="0.8" stroke="#c8c8c8" stroke-width="0.8"/><line x1="0" y1="9.6" x2="10" y2="9.6" stroke="#c8c8c8" stroke-width="0.8"/><line x1="0" y1="7.4" x2="10" y2="7.4" stroke="#c8c8c8" stroke-width="0.8"/><rect x="3" y="2.4" width="4" height="2.6" fill="#c8c8c8"/></svg>
<div style="position:absolute;left:767px;top:51px;width:1px;height:33px;background:#4a4a4a;"></div>
<svg style="position:absolute;left:771.8px;top:53px;" width="11" height="11" viewBox="0 0 11 11"><rect x="2" y="2" width="7" height="7" fill="none" stroke="#9a9a9a" stroke-width="0.7" stroke-dasharray="1 1"/><circle cx="1.5" cy="1.5" r="1.4" fill="#1a8cff"/><circle cx="9.5" cy="1.5" r="1.4" fill="#1a8cff"/><circle cx="1.5" cy="9.5" r="1.4" fill="#1a8cff"/><circle cx="9.5" cy="9.5" r="1.4" fill="#1a8cff"/></svg>
<div style="position:absolute;left:785.4px;top:50.6px;width:58px;height:13px;border:1px solid #686868;border-radius:3px;background:#4a4a4a;"></div>
<div style="position:absolute;left:796.9px;top:51.6px;width:1px;height:13px;background:#686868;"></div>
<div style="position:absolute;left:797.9px;top:51.6px;width:46px;height:13px;background:#454545;"></div>
<svg style="position:absolute;left:788.2px;top:52.7px;" width="6" height="11" viewBox="0 0 6 11"><polyline points="0.3,3.2 3,0.6 5.7,3.2" fill="none" stroke="#cfcfcf" stroke-width="0.95"/><polyline points="0.3,7.6 3,10.2 5.7,7.6" fill="none" stroke="#cfcfcf" stroke-width="0.95"/></svg>
<div id="f9" class="t" style="left:801.3px;top:54.25px;font-size:8.8px;line-height:8.8px;color:#ececec;font-weight:normal;font-family:'Liberation Sans',sans-serif;transform:scaleX(0.9092);transform-origin:0 0;">12 pt</div>
<div style="position:absolute;left:785.4px;top:69.1px;width:58px;height:12.5px;border:1px solid #686868;border-radius:3px;background:#4a4a4a;"></div>
<div style="position:absolute;left:786.4px;top:70.1px;width:46.5px;height:12.5px;background:#f0f0f0;"></div>
<svg style="position:absolute;left:786.4px;top:70.1px;" width="46.5" height="12.5" viewBox="0 0 46.5 12.5"><rect x="1.5" y="2.2" width="35" height="8.5" fill="#e2e2e2"/><path d="M1.5 2.2H36.5V10.7" fill="none" stroke="#333" stroke-width="1.3"/></svg>
<div style="position:absolute;left:832.9px;top:70.1px;width:1px;height:12.5px;background:#686868;"></div>
<svg style="position:absolute;left:835.5px;top:73.80000000000001px;" width="8" height="5.2" viewBox="0 0 8 5.2"><polyline points="1,1 4.0,4.2 7,1" fill="none" stroke="#c8c8c8" stroke-width="1.1"/></svg>
<svg style="position:absolute;left:1006.6px;top:61px;" width="7.5" height="11.2" viewBox="0 0 7.5 11.2"><path d="M3.2 0.3 L1.2 5.3 L3.8 5.3 L2.3 11 L6.8 4.2 L4.3 4.2 L5.6 0.3 Z" fill="#c8c8c8" transform="skewX(-8)"/></svg>
<div style="position:absolute;left:1020.3px;top:51px;width:1px;height:32px;background:#474747;"></div>
<svg style="position:absolute;left:1027.4px;top:54px;" width="8" height="8" viewBox="0 0 8 8"><g transform="translate(4,4)"><rect x="-0.9" y="-4.3" width="1.8" height="2.2" fill="#c8c8c8" transform="rotate(0)"/><rect x="-0.9" y="-4.3" width="1.8" height="2.2" fill="#c8c8c8" transform="rotate(45)"/><rect x="-0.9" y="-4.3" width="1.8" height="2.2" fill="#c8c8c8" transform="rotate(90)"/><rect x="-0.9" y="-4.3" width="1.8" height="2.2" fill="#c8c8c8" transform="rotate(135)"/><rect x="-0.9" y="-4.3" width="1.8" height="2.2" fill="#c8c8c8" transform="rotate(180)"/><rect x="-0.9" y="-4.3" width="1.8" height="2.2" fill="#c8c8c8" transform="rotate(225)"/><rect x="-0.9" y="-4.3" width="1.8" height="2.2" fill="#c8c8c8" transform="rotate(270)"/><rect x="-0.9" y="-4.3" width="1.8" height="2.2" fill="#c8c8c8" transform="rotate(315)"/><circle r="2.9" fill="#c8c8c8"/><circle r="1.5" fill="#535353"/></g></svg>
<svg style="position:absolute;left:1027px;top:73px;" width="9" height="7" viewBox="0 0 9 7"><rect x="0" y="0.2" width="8.8" height="1.1" fill="#c8c8c8"/><rect x="0" y="2.6" width="8.8" height="1.1" fill="#c8c8c8"/><rect x="0" y="5.0" width="8.8" height="1.1" fill="#c8c8c8"/></svg>
<svg style="position:absolute;left:77.8px;top:95.3px;" width="6" height="6" viewBox="0 0 6 6"><path d="M0.6 0.6L5.4 5.4M5.4 0.6L0.6 5.4" stroke="#e0e0e0" stroke-width="1.1"/></svg>
<div id="f10" class="t" style="left:89.8px;top:93.62px;font-size:8.6px;line-height:8.6px;color:#f0f0f0;font-weight:bold;font-family:'Liberation Sans',sans-serif;transform:scaleX(0.8464);transform-origin:0 0;">Essay Booklet.indd @ 60%</div>
<svg style="position:absolute;left:68px;top:108px;" width="12" height="11" viewBox="0 0 12 11"><line x1="0" y1="3.7" x2="11" y2="3.7" stroke="#4a4a4a" stroke-width="0.9"/><line x1="3.4" y1="0" x2="3.4" y2="11" stroke="#4a4a4a" stroke-width="0.9"/><line x1="11.4" y1="0" x2="11.4" y2="11.5" stroke="#777" stroke-width="0.9"/><line x1="0" y1="11.4" x2="12" y2="11.4" stroke="#777" stroke-width="0.9"/></svg>
<div style="position:absolute;left:80px;top:108px;width:834px;height:12px;overflow:hidden;"><svg width="834" height="12" style="position:absolute;left:0;top:0"><line x1="-52.52" y1="0" x2="-52.52" y2="11" stroke="#8a8a8a" stroke-width="0.9"/><line x1="-48.10" y1="9" x2="-48.10" y2="11" stroke="#9a9a9a" stroke-width="0.8"/><line x1="-43.68" y1="9" x2="-43.68" y2="11" stroke="#9a9a9a" stroke-width="0.8"/><line x1="-39.26" y1="9" x2="-39.26" y2="11" stroke="#9a9a9a" stroke-width="0.8"/><line x1="-34.84" y1="9" x2="-34.84" y2="11" stroke="#9a9a9a" stroke-width="0.8"/><line x1="-30.42" y1="9" x2="-30.42" y2="11" stroke="#9a9a9a" stroke-width="0.8"/><line x1="-26.00" y1="7" x2="-26.00" y2="11" stroke="#9a9a9a" stroke-width="0.8"/><line x1="-21.58" y1="9" x2="-21.58" y2="11" stroke="#9a9a9a" stroke-width="0.8"/><line x1="-17.16" y1="9" x2="-17.16" y2="11" stroke="#9a9a9a" stroke-width="0.8"/><line x1="-12.74" y1="9" x2="-12.74" y2="11" stroke="#9a9a9a" stroke-width="0.8"/><line x1="-8.32" y1="9" x2="-8.32" y2="11" stroke="#9a9a9a" stroke-width="0.8"/><line x1="-3.90" y1="9" x2="-3.90" y2="11" stroke="#9a9a9a" stroke-width="0.8"/><line x1="0.52" y1="0" x2="0.52" y2="11" stroke="#8a8a8a" stroke-width="0.9"/><line x1="4.94" y1="9" x2="4.94" y2="11" stroke="#9a9a9a" stroke-width="0.8"/><line x1="9.36" y1="9" x2="9.36" y2="11" stroke="#9a9a9a" stroke-width="0.8"/><line x1="13.78" y1="9" x2="13.78" y2="11" stroke="#9a9a9a" stroke-width="0.8"/><line x1="18.20" y1="9" x2="18.20" y2="11" stroke="#9a9a9a" stroke-width="0.8"/><line x1="22.62" y1="9" x2="22.62" y2="11" stroke="#9a9a9a" stroke-width="0.8"/><line x1="27.04" y1="7" x2="27.04" y2="11" stroke="#9a9a9a" stroke-width="0.8"/><line x1="31.46" y1="9" x2="31.46" y2="11" stroke="#9a9a9a" stroke-width="0.8"/><line x1="35.88" y1="9" x2="35.88" y2="11" stroke="#9a9a9a" stroke-width="0.8"/><line x1="40.30" y1="9" x2="40.30" y2="11" stroke="#9a9a9a" stroke-width="0.8"/><line x1="44.72" y1="9" x2="44.72" y2="11" stroke="#9a9a9a" stroke-width="0.8"/><line x1="49.14" y1="9" x2="49.14" y2="11" stroke="#9a9a9a" stroke-width="0.8"/><line x1="53.56" y1="0" x2="53.56" y2="11" stroke="#8a8a8a" stroke-width="0.9"/><line x1="57.98" y1="9" x2="57.98" y2="11" stroke="#9a9a9a" stroke-width="0.8"/><line x1="62.40" y1="9" x2="62.40" y2="11" stroke="#9a9a9a" stroke-width="0.8"/><line x1="66.82" y1="9" x2="66.82" y2="11" stroke="#9a9a9a" stroke-width="0.8"/><line x1="71.24" y1="9" x2="71.24" y2="11" stroke="#9a9a9a" stroke-width="0.8"/><line x1="75.66" y1="9" x2="75.66" y2="11" stroke="#9a9a9a" stroke-width="0.8"/><line x1="80.08" y1="7" x2="80.08" y2="11" stroke="#9a9a9a" stroke-width="0.8"/><line x1="84.50" y1="9" x2="84.50" y2="11" stroke="#9a9a9a" stroke-width="0.8"/><line x1="88.92" y1="9" x2="88.92" y2="11" stroke="#9a9a9a" stroke-width="0.8"/><line x1="93.34" y1="9" x2="93.34" y2="11" stroke="#9a9a9a" stroke-width="0.8"/><line x1="97.76" y1="9" x2="97.76" y2="11" stroke="#9a9a9a" stroke-width="0.8"/><line x1="102.18" y1="9" x2="102.18" y2="11" stroke="#9a9a9a" stroke-width="0.8"/><line x1="106.60" y1="0" x2="106.60" y2="11" stroke="#8a8a8a" stroke-width="0.9"/><line x1="111.02" y1="9" x2="111.02" y2="11" stroke="#9a9a9a" stroke-width="0.8"/><line x1="115.44" y1="9" x2="115.44" y2="11" stroke="#9a9a9a" stroke-width="0.8"/><line x1="119.86" y1="9" x2="119.86" y2="11" stroke="#9a9a9a" stroke-width="0.8"/><line x1="124.28" y1="9" x2="124.28" y2="11" stroke="#9a9a9a" stroke-width="0.8"/><line x1="128.70" y1="9" x2="128.70" y2="11" stroke="#9a9a9a" stroke-width="0.8"/><line x1="133.12" y1="7" x2="133.12" y2="11" stroke="#9a9a9a" stroke-width="0.8"/><line x1="137.54" y1="9" x2="137.54" y2="11" stroke="#9a9a9a" stroke-width="0.8"/><line x1="141.96" y1="9" x2="141.96" y2="11" stroke="#9a9a9a" stroke-width="0.8"/><line x1="146.38" y1="9" x2="146.38" y2="11" stroke="#9a9a9a" stroke-width="0.8"/><line x1="150.80" y1="9" x2="150.80" y2="11" stroke="#9a9a9a" stroke-width="0.8"/><line x1="155.22" y1="9" x2="155.22" y2="11" stroke="#9a9a9a" stroke-width="0.8"/><line x1="159.64" y1="0" x2="159.64" y2="11" stroke="#8a8a8a" stroke-width="0.9"/><line x1="164.06" y1="9" x2="164.06" y2="11" stroke="#9a9a9a" stroke-width="0.8"/><line x1="168.48" y1="9" x2="168.48" y2="11" stroke="#9a9a9a" stroke-width="0.8"/><line x1="172.90" y1="9" x2="172.90" y2="11" stroke="#9a9a9a" stroke-width="0.8"/><line x1="177.32" y1="9" x2="177.32" y2="11" stroke="#9a9a9a" stroke-width="0.8"/><line x1="181.74" y1="9" x2="181.74" y2="11" stroke="#9a9a9a" stroke-width="0.8"/><line x1="186.16" y1="7" x2="186.16" y2="11" stroke="#9a9a9a" stroke-width="0.8"/><line x1="190.58" y1="9" x2="190.58" y2="11" stroke="#9a9a9a" stroke-width="0.8"/><line x1="195.00" y1="9" x2="195.00" y2="11" stroke="#9a9a9a" stroke-width="0.8"/><line x1="199.42" y1="9" x2="199.42" y2="11" stroke="#9a9a9a" stroke-width="0.8"/><line x1="203.84" y1="9" x2="203.84" y2="11" stroke="#9a9a9a" stroke-width="0.8"/><line x1="208.26" y1="9" x2="208.26" y2="11" stroke="#9a9a9a" stroke-width="0.8"/><line x1="212.68" y1="0" x2="212.68" y2="11" stroke="#8a8a8a" stroke-width="0.9"/><line x1="217.10" y1="9" x2="217.10" y2="11" stroke="#9a9a9a" stroke-width="0.8"/><line x1="221.52" y1="9" x2="221.52" y2="11" stroke="#9a9a9a" stroke-width="0.8"/><line x1="225.94" y1="9" x2="225.94" y2="11" stroke="#9a9a9a" stroke-width="0.8"/><line x1="230.36" y1="9" x2="230.36" y2="11" stroke="#9a9a9a" stroke-width="0.8"/><line x1="234.78" y1="9" x2="234.78" y2="11" stroke="#9a9a9a" stroke-width="0.8"/><line x1="239.20" y1="7" x2="239.20" y2="11" stroke="#9a9a9a" stroke-width="0.8"/><line x1="243.62" y1="9" x2="243.62" y2="11" stroke="#9a9a9a" stroke-width="0.8"/><line x1="248.04" y1="9" x2="248.04" y2="11" stroke="#9a9a9a" stroke-width="0.8"/><line x1="252.46" y1="9" x2="252.46" y2="11" stroke="#9a9a9a" stroke-width="0.8"/><line x1="256.88" y1="9" x2="256.88" y2="11" stroke="#9a9a9a" stroke-width="0.8"/><line x1="261.30" y1="9" x2="261.30" y2="11" stroke="#9a9a9a" stroke-width="0.8"/><line x1="265.72" y1="0" x2="265.72" y2="11" stroke="#8a8a8a" stroke-width="0.9"/><line x1="270.14" y1="9" x2="270.14" y2="11" stroke="#9a9a9a" stroke-width="0.8"/><line x1="274.56" y1="9" x2="274.56" y2="11" stroke="#9a9a9a" stroke-width="0.8"/><line x1="278.98" y1="9" x2="278.98" y2="11" stroke="#9a9a9a" stroke-width="0.8"/><line x1="283.40" y1="9" x2="283.40" y2="11" stroke="#9a9a9a" stroke-width="0.8"/><line x1="287.82" y1="9" x2="287.82" y2="11" stroke="#9a9a9a" stroke-width="0.8"/><line x1="292.24" y1="7" x2="292.24" y2="11" stroke="#9a9a9a" stroke-width="0.8"/><line x1="296.66" y1="9" x2="296.66" y2="11" stroke="#9a9a9a" stroke-width="0.8"/><line x1="301.08" y1="9" x2="301.08" y2="11" stroke="#9a9a9a" stroke-width="0.8"/><line x1="305.50" y1="9" x2="305.50" y2="11" stroke="#9a9a9a" stroke-width="0.8"/><line x1="309.92" y1="9" x2="309.92" y2="11" stroke="#9a9a9a" stroke-width="0.8"/><line x1="314.34" y1="9" x2="314.34" y2="11" stroke="#9a9a9a" stroke-width="0.8"/><line x1="318.76" y1="0" x2="318.76" y2="11" stroke="#8a8a8a" stroke-width="0.9"/><line x1="323.18" y1="9" x2="323.18" y2="11" stroke="#9a9a9a" stroke-width="0.8"/><line x1="327.60" y1="9" x2="327.60" y2="11" stroke="#9a9a9a" stroke-width="0.8"/><line x1="332.02" y1="9" x2="332.02" y2="11" stroke="#9a9a9a" stroke-width="0.8"/><line x1="336.44" y1="9" x2="336.44" y2="11" stroke="#9a9a9a" stroke-width="0.8"/><line x1="340.86" y1="9" x2="340.86" y2="11" stroke="#9a9a9a" stroke-width="0.8"/><line x1="345.28" y1="7" x2="345.28" y2="11" stroke="#9a9a9a" stroke-width="0.8"/><line x1="349.70" y1="9" x2="349.70" y2="11" stroke="#9a9a9a" stroke-width="0.8"/><line x1="354.12" y1="9" x2="354.12" y2="11" stroke="#9a9a9a" stroke-width="0.8"/><line x1="358.54" y1="9" x2="358.54" y2="11" stroke="#9a9a9a" stroke-width="0.8"/><line x1="362.96" y1="9" x2="362.96" y2="11" stroke="#9a9a9a" stroke-width="0.8"/><line x1="367.38" y1="9" x2="367.38" y2="11" stroke="#9a9a9a" stroke-width="0.8"/><line x1="371.80" y1="0" x2="371.80" y2="11" stroke="#8a8a8a" stroke-width="0.9"/><line x1="376.22" y1="9" x2="376.22" y2="11" stroke="#9a9a9a" stroke-width="0.8"/><line x1="380.64" y1="9" x2="380.64" y2="11" stroke="#9a9a9a" stroke-width="0.8"/><line x1="385.06" y1="9" x2="385.06" y2="11" stroke="#9a9a9a" stroke-width="0.8"/><line x1="389.48" y1="9" x2="389.48" y2="11" stroke="#9a9a9a" stroke-width="0.8"/><line x1="393.90" y1="9" x2="393.90" y2="11" stroke="#9a9a9a" stroke-width="0.8"/><line x1="398.32" y1="7" x2="398.32" y2="11" stroke="#9a9a9a" stroke-width="0.8"/><line x1="402.74" y1="9" x2="402.74" y2="11" stroke="#9a9a9a" stroke-width="0.8"/><line x1="407.16" y1="9" x2="407.16" y2="11" stroke="#9a9a9a" stroke-width="0.8"/><line x1="411.58" y1="9" x2="411.58" y2="11" stroke="#9a9a9a" stroke-width="0.8"/><line x1="416.00" y1="9" x2="416.00" y2="11" stroke="#9a9a9a" stroke-width="0.8"/><line x1="420.42" y1="9" x2="420.42" y2="11" stroke="#9a9a9a" stroke-width="0.8"/><line x1="424.84" y1="0" x2="424.84" y2="11" stroke="#8a8a8a" stroke-width="0.9"/><line x1="429.26" y1="9" x2="429.26" y2="11" stroke="#9a9a9a" stroke-width="0.8"/><line x1="433.68" y1="9" x2="433.68" y2="11" stroke="#9a9a9a" stroke-width="0.8"/><line x1="438.10" y1="9" x2="438.10" y2="11" stroke="#9a9a9a" stroke-width="0.8"/><line x1="442.52" y1="9" x2="442.52" y2="11" stroke="#9a9a9a" stroke-width="0.8"/><line x1="446.94" y1="9" x2="446.94" y2="11" stroke="#9a9a9a" stroke-width="0.8"/><line x1="451.36" y1="7" x2="451.36" y2="11" stroke="#9a9a9a" stroke-width="0.8"/><line x1="455.78" y1="9" x2="455.78" y2="11" stroke="#9a9a9a" stroke-width="0.8"/><line x1="460.20" y1="9" x2="460.20" y2="11" stroke="#9a9a9a" stroke-width="0.8"/><line x1="464.62" y1="9" x2="464.62" y2="11" stroke="#9a9a9a" stroke-width="0.8"/><line x1="469.04" y1="9" x2="469.04" y2="11" stroke="#9a9a9a" stroke-width="0.8"/><line x1="473.46" y1="9" x2="473.46" y2="11" stroke="#9a9a9a" stroke-width="0.8"/><line x1="477.88" y1="0" x2="477.88" y2="11" stroke="#8a8a8a" stroke-width="0.9"/><line x1="482.30" y1="9" x2="482.30" y2="11" stroke="#9a9a9a" stroke-width="0.8"/><line x1="486.72" y1="9" x2="486.72" y2="11" stroke="#9a9a9a" stroke-width="0.8"/><line x1="491.14" y1="9" x2="491.14" y2="11" stroke="#9a9a9a" stroke-width="0.8"/><line x1="495.56" y1="9" x2="495.56" y2="11" stroke="#9a9a9a" stroke-width="0.8"/><line x1="499.98" y1="9" x2="499.98" y2="11" stroke="#9a9a9a" stroke-width="0.8"/><line x1="504.40" y1="7" x2="504.40" y2="11" stroke="#9a9a9a" stroke-width="0.8"/><line x1="508.82" y1="9" x2="508.82" y2="11" stroke="#9a9a9a" stroke-width="0.8"/><line x1="513.24" y1="9" x2="513.24" y2="11" stroke="#9a9a9a" stroke-width="0.8"/><line x1="517.66" y1="9" x2="517.66" y2="11" stroke="#9a9a9a" stroke-width="0.8"/><line x1="522.08" y1="9" x2="522.08" y2="11" stroke="#9a9a9a" stroke-width="0.8"/><line x1="526.50" y1="9" x2="526.50" y2="11" stroke="#9a9a9a" stroke-width="0.8"/><line x1="530.92" y1="0" x2="530.92" y2="11" stroke="#8a8a8a" stroke-width="0.9"/><line x1="535.34" y1="9" x2="535.34" y2="11" stroke="#9a9a9a" stroke-width="0.8"/><line x1="539.76" y1="9" x2="539.76" y2="11" stroke="#9a9a9a" stroke-width="0.8"/><line x1="544.18" y1="9" x2="544.18" y2="11" stroke="#9a9a9a" stroke-width="0.8"/><line x1="548.60" y1="9" x2="548.60" y2="11" stroke="#9a9a9a" stroke-width="0.8"/><line x1="553.02" y1="9" x2="553.02" y2="11" stroke="#9a9a9a" stroke-width="0.8"/><line x1="557.44" y1="7" x2="557.44" y2="11" stroke="#9a9a9a" stroke-width="0.8"/><line x1="561.86" y1="9" x2="561.86" y2="11" stroke="#9a9a9a" stroke-width="0.8"/><line x1="566.28" y1="9" x2="566.28" y2="11" stroke="#9a9a9a" stroke-width="0.8"/><line x1="570.70" y1="9" x2="570.70" y2="11" stroke="#9a9a9a" stroke-width="0.8"/><line x1="575.12" y1="9" x2="575.12" y2="11" stroke="#9a9a9a" stroke-width="0.8"/><line x1="579.54" y1="9" x2="579.54" y2="11" stroke="#9a9a9a" stroke-width="0.8"/><line x1="583.96" y1="0" x2="583.96" y2="11" stroke="#8a8a8a" stroke-width="0.9"/><line x1="588.38" y1="9" x2="588.38" y2="11" stroke="#9a9a9a" stroke-width="0.8"/><line x1="592.80" y1="9" x2="592.80" y2="11" stroke="#9a9a9a" stroke-width="0.8"/><line x1="597.22" y1="9" x2="597.22" y2="11" stroke="#9a9a9a" stroke-width="0.8"/><line x1="601.64" y1="9" x2="601.64" y2="11" stroke="#9a9a9a" stroke-width="0.8"/><line x1="606.06" y1="9" x2="606.06" y2="11" stroke="#9a9a9a" stroke-width="0.8"/><line x1="610.48" y1="7" x2="610.48" y2="11" stroke="#9a9a9a" stroke-width="0.8"/><line x1="614.90" y1="9" x2="614.90" y2="11" stroke="#9a9a9a" stroke-width="0.8"/><line x1="619.32" y1="9" x2="619.32" y2="11" stroke="#9a9a9a" stroke-width="0.8"/><line x1="623.74" y1="9" x2="623.74" y2="11" stroke="#9a9a9a" stroke-width="0.8"/><line x1="628.16" y1="9" x2="628.16" y2="11" stroke="#9a9a9a" stroke-width="0.8"/><line x1="632.58" y1="9" x2="632.58" y2="11" stroke="#9a9a9a" stroke-width="0.8"/><line x1="637.00" y1="0" x2="637.00" y2="11" stroke="#8a8a8a" stroke-width="0.9"/><line x1="641.42" y1="9" x2="641.42" y2="11" stroke="#9a9a9a" stroke-width="0.8"/><line x1="645.84" y1="9" x2="645.84" y2="11" stroke="#9a9a9a" stroke-width="0.8"/><line x1="650.26" y1="9" x2="650.26" y2="11" stroke="#9a9a9a" stroke-width="0.8"/><line x1="654.68" y1="9" x2="654.68" y2="11" stroke="#9a9a9a" stroke-width="0.8"/><line x1="659.10" y1="9" x2="659.10" y2="11" stroke="#9a9a9a" stroke-width="0.8"/><line x1="663.52" y1="7" x2="663.52" y2="11" stroke="#9a9a9a" stroke-width="0.8"/><line x1="667.94" y1="9" x2="667.94" y2="11" stroke="#9a9a9a" stroke-width="0.8"/><line x1="672.36" y1="9" x2="672.36" y2="11" stroke="#9a9a9a" stroke-width="0.8"/><line x1="676.78" y1="9" x2="676.78" y2="11" stroke="#9a9a9a" stroke-width="0.8"/><line x1="681.20" y1="9" x2="681.20" y2="11" stroke="#9a9a9a" stroke-width="0.8"/><line x1="685.62" y1="9" x2="685.62" y2="11" stroke="#9a9a9a" stroke-width="0.8"/><line x1="690.04" y1="0" x2="690.04" y2="11" stroke="#8a8a8a" stroke-width="0.9"/><line x1="694.46" y1="9" x2="694.46" y2="11" stroke="#9a9a9a" stroke-width="0.8"/><line x1="698.88" y1="9" x2="698.88" y2="11" stroke="#9a9a9a" stroke-width="0.8"/><line x1="703.30" y1="9" x2="703.30" y2="11" stroke="#9a9a9a" stroke-width="0.8"/><line x1="707.72" y1="9" x2="707.72" y2="11" stroke="#9a9a9a" stroke-width="0.8"/><line x1="712.14" y1="9" x2="712.14" y2="11" stroke="#9a9a9a" stroke-width="0.8"/><line x1="716.56" y1="7" x2="716.56" y2="11" stroke="#9a9a9a" stroke-width="0.8"/><line x1="720.98" y1="9" x2="720.98" y2="11" stroke="#9a9a9a" stroke-width="0.8"/><line x1="725.40" y1="9" x2="725.40" y2="11" stroke="#9a9a9a" stroke-width="0.8"/><line x1="729.82" y1="9" x2="729.82" y2="11" stroke="#9a9a9a" stroke-width="0.8"/><line x1="734.24" y1="9" x2="734.24" y2="11" stroke="#9a9a9a" stroke-width="0.8"/><line x1="738.66" y1="9" x2="738.66" y2="11" stroke="#9a9a9a" stroke-width="0.8"/><line x1="743.08" y1="0" x2="743.08" y2="11" stroke="#8a8a8a" stroke-width="0.9"/><line x1="747.50" y1="9" x2="747.50" y2="11" stroke="#9a9a9a" stroke-width="0.8"/><line x1="751.92" y1="9" x2="751.92" y2="11" stroke="#9a9a9a" stroke-width="0.8"/><line x1="756.34" y1="9" x2="756.34" y2="11" stroke="#9a9a9a" stroke-width="0.8"/><line x1="760.76" y1="9" x2="760.76" y2="11" stroke="#9a9a9a" stroke-width="0.8"/><line x1="765.18" y1="9" x2="765.18" y2="11" stroke="#9a9a9a" stroke-width="0.8"/><line x1="769.60" y1="7" x2="769.60" y2="11" stroke="#9a9a9a" stroke-width="0.8"/><line x1="774.02" y1="9" x2="774.02" y2="11" stroke="#9a9a9a" stroke-width="0.8"/><line x1="778.44" y1="9" x2="778.44" y2="11" stroke="#9a9a9a" stroke-width="0.8"/><line x1="782.86" y1="9" x2="782.86" y2="11" stroke="#9a9a9a" stroke-width="0.8"/><line x1="787.28" y1="9" x2="787.28" y2="11" stroke="#9a9a9a" stroke-width="0.8"/><line x1="791.70" y1="9" x2="791.70" y2="11" stroke="#9a9a9a" stroke-width="0.8"/><line x1="796.12" y1="0" x2="796.12" y2="11" stroke="#8a8a8a" stroke-width="0.9"/><line x1="800.54" y1="9" x2="800.54" y2="11" stroke="#9a9a9a" stroke-width="0.8"/><line x1="804.96" y1="9" x2="804.96" y2="11" stroke="#9a9a9a" stroke-width="0.8"/><line x1="809.38" y1="9" x2="809.38" y2="11" stroke="#9a9a9a" stroke-width="0.8"/><line x1="813.80" y1="9" x2="813.80" y2="11" stroke="#9a9a9a" stroke-width="0.8"/><line x1="818.22" y1="9" x2="818.22" y2="11" stroke="#9a9a9a" stroke-width="0.8"/><line x1="822.64" y1="7" x2="822.64" y2="11" stroke="#9a9a9a" stroke-width="0.8"/><line x1="827.06" y1="9" x2="827.06" y2="11" stroke="#9a9a9a" stroke-width="0.8"/><line x1="831.48" y1="9" x2="831.48" y2="11" stroke="#9a9a9a" stroke-width="0.8"/><line x1="835.90" y1="9" x2="835.90" y2="11" stroke="#9a9a9a" stroke-width="0.8"/><line x1="840.32" y1="9" x2="840.32" y2="11" stroke="#9a9a9a" stroke-width="0.8"/><line x1="844.74" y1="9" x2="844.74" y2="11" stroke="#9a9a9a" stroke-width="0.8"/><line x1="0" y1="11.4" x2="834" y2="11.4" stroke="#777" stroke-width="0.9"/></svg></div>
<div class="t rl" style="left:82.11999999999999px;top:109.20px;font-size:7.8px;line-height:7.8px;color:#e2e2e2;font-weight:normal;font-family:'Liberation Sans',sans-serif;-webkit-text-stroke:0.15px #e2e2e2;">144</div>
<div class="t rl" style="left:135.16px;top:109.20px;font-size:7.8px;line-height:7.8px;color:#e2e2e2;font-weight:normal;font-family:'Liberation Sans',sans-serif;-webkit-text-stroke:0.15px #e2e2e2;">72</div>
<div class="t rl" style="left:188.2px;top:109.20px;font-size:7.8px;line-height:7.8px;color:#e2e2e2;font-weight:normal;font-family:'Liberation Sans',sans-serif;-webkit-text-stroke:0.15px #e2e2e2;">0</div>
<div class="t rl" style="left:241.23999999999998px;top:109.20px;font-size:7.8px;line-height:7.8px;color:#e2e2e2;font-weight:normal;font-family:'Liberation Sans',sans-serif;-webkit-text-stroke:0.15px #e2e2e2;">72</div>
<div class="t rl" style="left:294.28000000000003px;top:109.20px;font-size:7.8px;line-height:7.8px;color:#e2e2e2;font-weight:normal;font-family:'Liberation Sans',sans-serif;-webkit-text-stroke:0.15px #e2e2e2;">144</div>
<div class="t rl" style="left:347.32000000000005px;top:109.20px;font-size:7.8px;line-height:7.8px;color:#e2e2e2;font-weight:normal;font-family:'Liberation Sans',sans-serif;-webkit-text-stroke:0.15px #e2e2e2;">216</div>
<div class="t rl" style="left:400.36px;top:109.20px;font-size:7.8px;line-height:7.8px;color:#e2e2e2;font-weight:normal;font-family:'Liberation Sans',sans-serif;-webkit-text-stroke:0.15px #e2e2e2;">288</div>
<div class="t rl" style="left:453.4px;top:109.20px;font-size:7.8px;line-height:7.8px;color:#e2e2e2;font-weight:normal;font-family:'Liberation Sans',sans-serif;-webkit-text-stroke:0.15px #e2e2e2;">360</div>
<div class="t rl" style="left:506.44000000000005px;top:109.20px;font-size:7.8px;line-height:7.8px;color:#e2e2e2;font-weight:normal;font-family:'Liberation Sans',sans-serif;-webkit-text-stroke:0.15px #e2e2e2;">432</div>
<div class="t rl" style="left:559.48px;top:109.20px;font-size:7.8px;line-height:7.8px;color:#e2e2e2;font-weight:normal;font-family:'Liberation Sans',sans-serif;-webkit-text-stroke:0.15px #e2e2e2;">504</div>
<div class="t rl" style="left:612.52px;top:109.20px;font-size:7.8px;line-height:7.8px;color:#e2e2e2;font-weight:normal;font-family:'Liberation Sans',sans-serif;-webkit-text-stroke:0.15px #e2e2e2;">576</div>
<div class="t rl" style="left:665.5600000000001px;top:109.20px;font-size:7.8px;line-height:7.8px;color:#e2e2e2;font-weight:normal;font-family:'Liberation Sans',sans-serif;-webkit-text-stroke:0.15px #e2e2e2;">648</div>
<div class="t rl" style="left:718.6px;top:109.20px;font-size:7.8px;line-height:7.8px;color:#e2e2e2;font-weight:normal;font-family:'Liberation Sans',sans-serif;-webkit-text-stroke:0.15px #e2e2e2;">720</div>
<div class="t rl" style="left:771.64px;top:109.20px;font-size:7.8px;line-height:7.8px;color:#e2e2e2;font-weight:normal;font-family:'Liberation Sans',sans-serif;-webkit-text-stroke:0.15px #e2e2e2;">792</div>
<div class="t rl" style="left:824.6800000000001px;top:109.20px;font-size:7.8px;line-height:7.8px;color:#e2e2e2;font-weight:normal;font-family:'Liberation Sans',sans-serif;-webkit-text-stroke:0.15px #e2e2e2;">864</div>
<div class="t rl" style="left:877.72px;top:109.20px;font-size:7.8px;line-height:7.8px;color:#e2e2e2;font-weight:normal;font-family:'Liberation Sans',sans-serif;-webkit-text-stroke:0.15px #e2e2e2;">936</div>
<div style="position:absolute;left:68px;top:119px;width:12px;height:462px;overflow:hidden;"><svg width="12" height="462" style="position:absolute;left:0;top:0"><line x1="0" y1="12.50" x2="12" y2="12.50" stroke="#8a8a8a" stroke-width="0.9"/><line x1="10" y1="16.92" x2="12" y2="16.92" stroke="#9a9a9a" stroke-width="0.8"/><line x1="10" y1="21.34" x2="12" y2="21.34" stroke="#9a9a9a" stroke-width="0.8"/><line x1="10" y1="25.76" x2="12" y2="25.76" stroke="#9a9a9a" stroke-width="0.8"/><line x1="10" y1="30.18" x2="12" y2="30.18" stroke="#9a9a9a" stroke-width="0.8"/><line x1="10" y1="34.60" x2="12" y2="34.60" stroke="#9a9a9a" stroke-width="0.8"/><line x1="8" y1="39.02" x2="12" y2="39.02" stroke="#9a9a9a" stroke-width="0.8"/><line x1="10" y1="43.44" x2="12" y2="43.44" stroke="#9a9a9a" stroke-width="0.8"/><line x1="10" y1="47.86" x2="12" y2="47.86" stroke="#9a9a9a" stroke-width="0.8"/><line x1="10" y1="52.28" x2="12" y2="52.28" stroke="#9a9a9a" stroke-width="0.8"/><line x1="10" y1="56.70" x2="12" y2="56.70" stroke="#9a9a9a" stroke-width="0.8"/><line x1="10" y1="61.12" x2="12" y2="61.12" stroke="#9a9a9a" stroke-width="0.8"/><line x1="0" y1="65.54" x2="12" y2="65.54" stroke="#8a8a8a" stroke-width="0.9"/><line x1="10" y1="69.96" x2="12" y2="69.96" stroke="#9a9a9a" stroke-width="0.8"/><line x1="10" y1="74.38" x2="12" y2="74.38" stroke="#9a9a9a" stroke-width="0.8"/><line x1="10" y1="78.80" x2="12" y2="78.80" stroke="#9a9a9a" stroke-width="0.8"/><line x1="10" y1="83.22" x2="12" y2="83.22" stroke="#9a9a9a" stroke-width="0.8"/><line x1="10" y1="87.64" x2="12" y2="87.64" stroke="#9a9a9a" stroke-width="0.8"/><line x1="8" y1="92.06" x2="12" y2="92.06" stroke="#9a9a9a" stroke-width="0.8"/><line x1="10" y1="96.48" x2="12" y2="96.48" stroke="#9a9a9a" stroke-width="0.8"/><line x1="10" y1="100.90" x2="12" y2="100.90" stroke="#9a9a9a" stroke-width="0.8"/><line x1="10" y1="105.32" x2="12" y2="105.32" stroke="#9a9a9a" stroke-width="0.8"/><line x1="10" y1="109.74" x2="12" y2="109.74" stroke="#9a9a9a" stroke-width="0.8"/><line x1="10" y1="114.16" x2="12" y2="114.16" stroke="#9a9a9a" stroke-width="0.8"/><line x1="0" y1="118.58" x2="12" y2="118.58" stroke="#8a8a8a" stroke-width="0.9"/><line x1="10" y1="123.00" x2="12" y2="123.00" stroke="#9a9a9a" stroke-width="0.8"/><line x1="10" y1="127.42" x2="12" y2="127.42" stroke="#9a9a9a" stroke-width="0.8"/><line x1="10" y1="131.84" x2="12" y2="131.84" stroke="#9a9a9a" stroke-width="0.8"/><line x1="10" y1="136.26" x2="12" y2="136.26" stroke="#9a9a9a" stroke-width="0.8"/><line x1="10" y1="140.68" x2="12" y2="140.68" stroke="#9a9a9a" stroke-width="0.8"/><line x1="8" y1="145.10" x2="12" y2="145.10" stroke="#9a9a9a" stroke-width="0.8"/><line x1="10" y1="149.52" x2="12" y2="149.52" stroke="#9a9a9a" stroke-width="0.8"/><line x1="10" y1="153.94" x2="12" y2="153.94" stroke="#9a9a9a" stroke-width="0.8"/><line x1="10" y1="158.36" x2="12" y2="158.36" stroke="#9a9a9a" stroke-width="0.8"/><line x1="10" y1="162.78" x2="12" y2="162.78" stroke="#9a9a9a" stroke-width="0.8"/><line x1="10" y1="167.20" x2="12" y2="167.20" stroke="#9a9a9a" stroke-width="0.8"/><line x1="0" y1="171.62" x2="12" y2="171.62" stroke="#8a8a8a" stroke-width="0.9"/><line x1="10" y1="176.04" x2="12" y2="176.04" stroke="#9a9a9a" stroke-width="0.8"/><line x1="10" y1="180.46" x2="12" y2="180.46" stroke="#9a9a9a" stroke-width="0.8"/><line x1="10" y1="184.88" x2="12" y2="184.88" stroke="#9a9a9a" stroke-width="0.8"/><line x1="10" y1="189.30" x2="12" y2="189.30" stroke="#9a9a9a" stroke-width="0.8"/><line x1="10" y1="193.72" x2="12" y2="193.72" stroke="#9a9a9a" stroke-width="0.8"/><line x1="8" y1="198.14" x2="12" y2="198.14" stroke="#9a9a9a" stroke-width="0.8"/><line x1="10" y1="202.56" x2="12" y2="202.56" stroke="#9a9a9a" stroke-width="0.8"/><line x1="10" y1="206.98" x2="12" y2="206.98" stroke="#9a9a9a" stroke-width="0.8"/><line x1="10" y1="211.40" x2="12" y2="211.40" stroke="#9a9a9a" stroke-width="0.8"/><line x1="10" y1="215.82" x2="12" y2="215.82" stroke="#9a9a9a" stroke-width="0.8"/><line x1="10" y1="220.24" x2="12" y2="220.24" stroke="#9a9a9a" stroke-width="0.8"/><line x1="0" y1="224.66" x2="12" y2="224.66" stroke="#8a8a8a" stroke-width="0.9"/><line x1="10" y1="229.08" x2="12" y2="229.08" stroke="#9a9a9a" stroke-width="0.8"/><line x1="10" y1="233.50" x2="12" y2="233.50" stroke="#9a9a9a" stroke-width="0.8"/><line x1="10" y1="237.92" x2="12" y2="237.92" stroke="#9a9a9a" stroke-width="0.8"/><line x1="10" y1="242.34" x2="12" y2="242.34" stroke="#9a9a9a" stroke-width="0.8"/><line x1="10" y1="246.76" x2="12" y2="246.76" stroke="#9a9a9a" stroke-width="0.8"/><line x1="8" y1="251.18" x2="12" y2="251.18" stroke="#9a9a9a" stroke-width="0.8"/><line x1="10" y1="255.60" x2="12" y2="255.60" stroke="#9a9a9a" stroke-width="0.8"/><line x1="10" y1="260.02" x2="12" y2="260.02" stroke="#9a9a9a" stroke-width="0.8"/><line x1="10" y1="264.44" x2="12" y2="264.44" stroke="#9a9a9a" stroke-width="0.8"/><line x1="10" y1="268.86" x2="12" y2="268.86" stroke="#9a9a9a" stroke-width="0.8"/><line x1="10" y1="273.28" x2="12" y2="273.28" stroke="#9a9a9a" stroke-width="0.8"/><line x1="0" y1="277.70" x2="12" y2="277.70" stroke="#8a8a8a" stroke-width="0.9"/><line x1="10" y1="282.12" x2="12" y2="282.12" stroke="#9a9a9a" stroke-width="0.8"/><line x1="10" y1="286.54" x2="12" y2="286.54" stroke="#9a9a9a" stroke-width="0.8"/><line x1="10" y1="290.96" x2="12" y2="290.96" stroke="#9a9a9a" stroke-width="0.8"/><line x1="10" y1="295.38" x2="12" y2="295.38" stroke="#9a9a9a" stroke-width="0.8"/><line x1="10" y1="299.80" x2="12" y2="299.80" stroke="#9a9a9a" stroke-width="0.8"/><line x1="8" y1="304.22" x2="12" y2="304.22" stroke="#9a9a9a" stroke-width="0.8"/><line x1="10" y1="308.64" x2="12" y2="308.64" stroke="#9a9a9a" stroke-width="0.8"/><line x1="10" y1="313.06" x2="12" y2="313.06" stroke="#9a9a9a" stroke-width="0.8"/><line x1="10" y1="317.48" x2="12" y2="317.48" stroke="#9a9a9a" stroke-width="0.8"/><line x1="10" y1="321.90" x2="12" y2="321.90" stroke="#9a9a9a" stroke-width="0.8"/><line x1="10" y1="326.32" x2="12" y2="326.32" stroke="#9a9a9a" stroke-width="0.8"/><line x1="0" y1="330.74" x2="12" y2="330.74" stroke="#8a8a8a" stroke-width="0.9"/><line x1="10" y1="335.16" x2="12" y2="335.16" stroke="#9a9a9a" stroke-width="0.8"/><line x1="10" y1="339.58" x2="12" y2="339.58" stroke="#9a9a9a" stroke-width="0.8"/><line x1="10" y1="344.00" x2="12" y2="344.00" stroke="#9a9a9a" stroke-width="0.8"/><line x1="10" y1="348.42" x2="12" y2="348.42" stroke="#9a9a9a" stroke-width="0.8"/><line x1="10" y1="352.84" x2="12" y2="352.84" stroke="#9a9a9a" stroke-width="0.8"/><line x1="8" y1="357.26" x2="12" y2="357.26" stroke="#9a9a9a" stroke-width="0.8"/><line x1="10" y1="361.68" x2="12" y2="361.68" stroke="#9a9a9a" stroke-width="0.8"/><line x1="10" y1="366.10" x2="12" y2="366.10" stroke="#9a9a9a" stroke-width="0.8"/><line x1="10" y1="370.52" x2="12" y2="370.52" stroke="#9a9a9a" stroke-width="0.8"/><line x1="10" y1="374.94" x2="12" y2="374.94" stroke="#9a9a9a" stroke-width="0.8"/><line x1="10" y1="379.36" x2="12" y2="379.36" stroke="#9a9a9a" stroke-width="0.8"/><line x1="0" y1="383.78" x2="12" y2="383.78" stroke="#8a8a8a" stroke-width="0.9"/><line x1="10" y1="388.20" x2="12" y2="388.20" stroke="#9a9a9a" stroke-width="0.8"/><line x1="10" y1="392.62" x2="12" y2="392.62" stroke="#9a9a9a" stroke-width="0.8"/><line x1="10" y1="397.04" x2="12" y2="397.04" stroke="#9a9a9a" stroke-width="0.8"/><line x1="10" y1="401.46" x2="12" y2="401.46" stroke="#9a9a9a" stroke-width="0.8"/><line x1="10" y1="405.88" x2="12" y2="405.88" stroke="#9a9a9a" stroke-width="0.8"/><line x1="8" y1="410.30" x2="12" y2="410.30" stroke="#9a9a9a" stroke-width="0.8"/><line x1="10" y1="414.72" x2="12" y2="414.72" stroke="#9a9a9a" stroke-width="0.8"/><line x1="10" y1="419.14" x2="12" y2="419.14" stroke="#9a9a9a" stroke-width="0.8"/><line x1="10" y1="423.56" x2="12" y2="423.56" stroke="#9a9a9a" stroke-width="0.8"/><line x1="10" y1="427.98" x2="12" y2="427.98" stroke="#9a9a9a" stroke-width="0.8"/><line x1="10" y1="432.40" x2="12" y2="432.40" stroke="#9a9a9a" stroke-width="0.8"/><line x1="0" y1="436.82" x2="12" y2="436.82" stroke="#8a8a8a" stroke-width="0.9"/><line x1="10" y1="441.24" x2="12" y2="441.24" stroke="#9a9a9a" stroke-width="0.8"/><line x1="10" y1="445.66" x2="12" y2="445.66" stroke="#9a9a9a" stroke-width="0.8"/><line x1="10" y1="450.08" x2="12" y2="450.08" stroke="#9a9a9a" stroke-width="0.8"/><line x1="10" y1="454.50" x2="12" y2="454.50" stroke="#9a9a9a" stroke-width="0.8"/><line x1="10" y1="458.92" x2="12" y2="458.92" stroke="#9a9a9a" stroke-width="0.8"/><line x1="8" y1="463.34" x2="12" y2="463.34" stroke="#9a9a9a" stroke-width="0.8"/><line x1="10" y1="467.76" x2="12" y2="467.76" stroke="#9a9a9a" stroke-width="0.8"/><line x1="10" y1="472.18" x2="12" y2="472.18" stroke="#9a9a9a" stroke-width="0.8"/><line x1="10" y1="476.60" x2="12" y2="476.60" stroke="#9a9a9a" stroke-width="0.8"/><line x1="10" y1="481.02" x2="12" y2="481.02" stroke="#9a9a9a" stroke-width="0.8"/><line x1="10" y1="485.44" x2="12" y2="485.44" stroke="#9a9a9a" stroke-width="0.8"/><line x1="0" y1="489.86" x2="12" y2="489.86" stroke="#8a8a8a" stroke-width="0.9"/><line x1="10" y1="494.28" x2="12" y2="494.28" stroke="#9a9a9a" stroke-width="0.8"/><line x1="10" y1="498.70" x2="12" y2="498.70" stroke="#9a9a9a" stroke-width="0.8"/><line x1="10" y1="503.12" x2="12" y2="503.12" stroke="#9a9a9a" stroke-width="0.8"/><line x1="10" y1="507.54" x2="12" y2="507.54" stroke="#9a9a9a" stroke-width="0.8"/><line x1="10" y1="511.96" x2="12" y2="511.96" stroke="#9a9a9a" stroke-width="0.8"/><line x1="8" y1="516.38" x2="12" y2="516.38" stroke="#9a9a9a" stroke-width="0.8"/><line x1="10" y1="520.80" x2="12" y2="520.80" stroke="#9a9a9a" stroke-width="0.8"/><line x1="10" y1="525.22" x2="12" y2="525.22" stroke="#9a9a9a" stroke-width="0.8"/><line x1="10" y1="529.64" x2="12" y2="529.64" stroke="#9a9a9a" stroke-width="0.8"/><line x1="10" y1="534.06" x2="12" y2="534.06" stroke="#9a9a9a" stroke-width="0.8"/><line x1="10" y1="538.48" x2="12" y2="538.48" stroke="#9a9a9a" stroke-width="0.8"/><line x1="10" y1="8.08" x2="12" y2="8.08" stroke="#9a9a9a" stroke-width="0.8"/><line x1="10" y1="3.66" x2="12" y2="3.66" stroke="#9a9a9a" stroke-width="0.8"/><line x1="10" y1="-0.76" x2="12" y2="-0.76" stroke="#9a9a9a" stroke-width="0.8"/><line x1="10" y1="-5.18" x2="12" y2="-5.18" stroke="#9a9a9a" stroke-width="0.8"/><line x1="10" y1="-9.60" x2="12" y2="-9.60" stroke="#9a9a9a" stroke-width="0.8"/><line x1="8" y1="-14.02" x2="12" y2="-14.02" stroke="#9a9a9a" stroke-width="0.8"/><line x1="10" y1="-18.44" x2="12" y2="-18.44" stroke="#9a9a9a" stroke-width="0.8"/><line x1="10" y1="-22.86" x2="12" y2="-22.86" stroke="#9a9a9a" stroke-width="0.8"/><line x1="10" y1="-27.28" x2="12" y2="-27.28" stroke="#9a9a9a" stroke-width="0.8"/><line x1="10" y1="-31.70" x2="12" y2="-31.70" stroke="#9a9a9a" stroke-width="0.8"/><line x1="10" y1="-36.12" x2="12" y2="-36.12" stroke="#9a9a9a" stroke-width="0.8"/><line x1="11.4" y1="0" x2="11.4" y2="462" stroke="#777" stroke-width="0.9"/></svg></div>
<div class="t" style="left:69.6px;top:133.50px;width:5px;height:6px;font-size:7px;line-height:6px;color:#dcdcdc;text-align:center;">0</div>
<div class="t" style="left:69.6px;top:186.54px;width:5px;height:6px;font-size:7px;line-height:6px;color:#dcdcdc;text-align:center;">7</div>
<div class="t" style="left:69.6px;top:192.44px;width:5px;height:6px;font-size:7px;line-height:6px;color:#dcdcdc;text-align:center;">2</div>
<div class="t" style="left:69.6px;top:239.58px;width:5px;height:6px;font-size:7px;line-height:6px;color:#dcdcdc;text-align:center;">1</div>
<div class="t" style="left:69.6px;top:245.48px;width:5px;height:6px;font-size:7px;line-height:6px;color:#dcdcdc;text-align:center;">4</div>
<div class="t" style="left:69.6px;top:251.38px;width:5px;height:6px;font-size:7px;line-height:6px;color:#dcdcdc;text-align:center;">4</div>
<div class="t" style="left:69.6px;top:292.62px;width:5px;height:6px;font-size:7px;line-height:6px;color:#dcdcdc;text-align:center;">2</div>
<div class="t" style="left:69.6px;top:298.52px;width:5px;height:6px;font-size:7px;line-height:6px;color:#dcdcdc;text-align:center;">1</div>
<div class="t" style="left:69.6px;top:304.42px;width:5px;height:6px;font-size:7px;line-height:6px;color:#dcdcdc;text-align:center;">6</div>
<div class="t" style="left:69.6px;top:345.66px;width:5px;height:6px;font-size:7px;line-height:6px;color:#dcdcdc;text-align:center;">2</div>
<div class="t" style="left:69.6px;top:351.56px;width:5px;height:6px;font-size:7px;line-height:6px;color:#dcdcdc;text-align:center;">8</div>
<div class="t" style="left:69.6px;top:357.46px;width:5px;height:6px;font-size:7px;line-height:6px;color:#dcdcdc;text-align:center;">8</div>
<div class="t" style="left:69.6px;top:398.70px;width:5px;height:6px;font-size:7px;line-height:6px;color:#dcdcdc;text-align:center;">3</div>
<div class="t" style="left:69.6px;top:404.60px;width:5px;height:6px;font-size:7px;line-height:6px;color:#dcdcdc;text-align:center;">6</div>
<div class="t" style="left:69.6px;top:410.50px;width:5px;height:6px;font-size:7px;line-height:6px;color:#dcdcdc;text-align:center;">0</div>
<div class="t" style="left:69.6px;top:451.74px;width:5px;height:6px;font-size:7px;line-height:6px;color:#dcdcdc;text-align:center;">4</div>
<div class="t" style="left:69.6px;top:457.64px;width:5px;height:6px;font-size:7px;line-height:6px;color:#dcdcdc;text-align:center;">3</div>
<div class="t" style="left:69.6px;top:463.54px;width:5px;height:6px;font-size:7px;line-height:6px;color:#dcdcdc;text-align:center;">2</div>
<div class="t" style="left:69.6px;top:504.78px;width:5px;height:6px;font-size:7px;line-height:6px;color:#dcdcdc;text-align:center;">5</div>
<div class="t" style="left:69.6px;top:510.68px;width:5px;height:6px;font-size:7px;line-height:6px;color:#dcdcdc;text-align:center;">0</div>
<div class="t" style="left:69.6px;top:516.58px;width:5px;height:6px;font-size:7px;line-height:6px;color:#dcdcdc;text-align:center;">4</div>
<div class="t" style="left:69.6px;top:557.82px;width:5px;height:6px;font-size:7px;line-height:6px;color:#dcdcdc;text-align:center;">5</div>
<div class="t" style="left:69.6px;top:563.72px;width:5px;height:6px;font-size:7px;line-height:6px;color:#dcdcdc;text-align:center;">7</div>
<div class="t" style="left:69.6px;top:569.62px;width:5px;height:6px;font-size:7px;line-height:6px;color:#dcdcdc;text-align:center;">6</div>
<div style="position:absolute;left:77.2px;top:119px;width:2.4px;height:462px;overflow:hidden;"><svg width="2.4" height="462" style="position:absolute;left:0;top:0"><rect x="0" y="0" width="2.4" height="462" fill="#606060"/><rect x="0" y="-91.97" width="2.4" height="1.2" fill="#303030"/><rect x="0" y="-87.55" width="2.4" height="1.2" fill="#303030"/><rect x="0" y="-83.13" width="2.4" height="1.2" fill="#303030"/><rect x="0" y="-78.71" width="2.4" height="1.2" fill="#303030"/><rect x="0" y="-74.29" width="2.4" height="1.2" fill="#303030"/><rect x="0" y="-69.87" width="2.4" height="1.2" fill="#303030"/><rect x="0" y="-65.45" width="2.4" height="1.2" fill="#303030"/><rect x="0" y="-61.03" width="2.4" height="1.2" fill="#303030"/><rect x="0" y="-56.61" width="2.4" height="1.2" fill="#303030"/><rect x="0" y="-52.19" width="2.4" height="1.2" fill="#303030"/><rect x="0" y="-47.77" width="2.4" height="1.2" fill="#303030"/><rect x="0" y="-43.35" width="2.4" height="1.2" fill="#303030"/><rect x="0" y="-38.93" width="2.4" height="1.2" fill="#303030"/><rect x="0" y="-34.51" width="2.4" height="1.2" fill="#303030"/><rect x="0" y="-30.09" width="2.4" height="1.2" fill="#303030"/><rect x="0" y="-25.67" width="2.4" height="1.2" fill="#303030"/><rect x="0" y="-21.25" width="2.4" height="1.2" fill="#303030"/><rect x="0" y="-16.83" width="2.4" height="1.2" fill="#303030"/><rect x="0" y="-12.41" width="2.4" height="1.2" fill="#303030"/><rect x="0" y="-7.99" width="2.4" height="1.2" fill="#303030"/><rect x="0" y="-3.57" width="2.4" height="1.2" fill="#303030"/><rect x="0" y="0.85" width="2.4" height="1.2" fill="#303030"/><rect x="0" y="5.27" width="2.4" height="1.2" fill="#303030"/><rect x="0" y="9.69" width="2.4" height="1.2" fill="#303030"/><rect x="0" y="14.11" width="2.4" height="1.2" fill="#303030"/><rect x="0" y="18.53" width="2.4" height="1.2" fill="#303030"/><rect x="0" y="22.95" width="2.4" height="1.2" fill="#303030"/><rect x="0" y="27.37" width="2.4" height="1.2" fill="#303030"/><rect x="0" y="31.79" width="2.4" height="1.2" fill="#303030"/><rect x="0" y="36.21" width="2.4" height="1.2" fill="#303030"/><rect x="0" y="40.63" width="2.4" height="1.2" fill="#303030"/><rect x="0" y="45.05" width="2.4" height="1.2" fill="#303030"/><rect x="0" y="49.47" width="2.4" height="1.2" fill="#303030"/><rect x="0" y="53.89" width="2.4" height="1.2" fill="#303030"/><rect x="0" y="58.31" width="2.4" height="1.2" fill="#303030"/><rect x="0" y="62.73" width="2.4" height="1.2" fill="#303030"/><rect x="0" y="67.15" width="2.4" height="1.2" fill="#303030"/><rect x="0" y="71.57" width="2.4" height="1.2" fill="#303030"/><rect x="0" y="75.99" width="2.4" height="1.2" fill="#303030"/><rect x="0" y="80.41" width="2.4" height="1.2" fill="#303030"/><rect x="0" y="84.83" width="2.4" height="1.2" fill="#303030"/><rect x="0" y="89.25" width="2.4" height="1.2" fill="#303030"/><rect x="0" y="93.67" width="2.4" height="1.2" fill="#303030"/><rect x="0" y="98.09" width="2.4" height="1.2" fill="#303030"/><rect x="0" y="102.51" width="2.4" height="1.2" fill="#303030"/><rect x="0" y="106.93" width="2.4" height="1.2" fill="#303030"/><rect x="0" y="111.35" width="2.4" height="1.2" fill="#303030"/><rect x="0" y="115.77" width="2.4" height="1.2" fill="#303030"/><rect x="0" y="120.19" width="2.4" height="1.2" fill="#303030"/><rect x="0" y="124.61" width="2.4" height="1.2" fill="#303030"/><rect x="0" y="129.03" width="2.4" height="1.2" fill="#303030"/><rect x="0" y="133.45" width="2.4" height="1.2" fill="#303030"/><rect x="0" y="137.87" width="2.4" height="1.2" fill="#303030"/><rect x="0" y="142.29" width="2.4" height="1.2" fill="#303030"/><rect x="0" y="146.71" width="2.4" height="1.2" fill="#303030"/><rect x="0" y="151.13" width="2.4" height="1.2" fill="#303030"/><rect x="0" y="155.55" width="2.4" height="1.2" fill="#303030"/><rect x="0" y="159.97" width="2.4" height="1.2" fill="#303030"/><rect x="0" y="164.39" width="2.4" height="1.2" fill="#303030"/><rect x="0" y="168.81" width="2.4" height="1.2" fill="#303030"/><rect x="0" y="173.23" width="2.4" height="1.2" fill="#303030"/><rect x="0" y="177.65" width="2.4" height="1.2" fill="#303030"/><rect x="0" y="182.07" width="2.4" height="1.2" fill="#303030"/><rect x="0" y="186.49" width="2.4" height="1.2" fill="#303030"/><rect x="0" y="190.91" width="2.4" height="1.2" fill="#303030"/><rect x="0" y="195.33" width="2.4" height="1.2" fill="#303030"/><rect x="0" y="199.75" width="2.4" height="1.2" fill="#303030"/><rect x="0" y="204.17" width="2.4" height="1.2" fill="#303030"/><rect x="0" y="208.59" width="2.4" height="1.2" fill="#303030"/><rect x="0" y="213.01" width="2.4" height="1.2" fill="#303030"/><rect x="0" y="217.43" width="2.4" height="1.2" fill="#303030"/><rect x="0" y="221.85" width="2.4" height="1.2" fill="#303030"/><rect x="0" y="226.27" width="2.4" height="1.2" fill="#303030"/><rect x="0" y="230.69" width="2.4" height="1.2" fill="#303030"/><rect x="0" y="235.11" width="2.4" height="1.2" fill="#303030"/><rect x="0" y="239.53" width="2.4" height="1.2" fill="#303030"/><rect x="0" y="243.95" width="2.4" height="1.2" fill="#303030"/><rect x="0" y="248.37" width="2.4" height="1.2" fill="#303030"/><rect x="0" y="252.79" width="2.4" height="1.2" fill="#303030"/><rect x="0" y="257.21" width="2.4" height="1.2" fill="#303030"/><rect x="0" y="261.63" width="2.4" height="1.2" fill="#303030"/><rect x="0" y="266.05" width="2.4" height="1.2" fill="#303030"/><rect x="0" y="270.47" width="2.4" height="1.2" fill="#303030"/><rect x="0" y="274.89" width="2.4" height="1.2" fill="#303030"/><rect x="0" y="279.31" width="2.4" height="1.2" fill="#303030"/><rect x="0" y="283.73" width="2.4" height="1.2" fill="#303030"/><rect x="0" y="288.15" width="2.4" height="1.2" fill="#303030"/><rect x="0" y="292.57" width="2.4" height="1.2" fill="#303030"/><rect x="0" y="296.99" width="2.4" height="1.2" fill="#303030"/><rect x="0" y="301.41" width="2.4" height="1.2" fill="#303030"/><rect x="0" y="305.83" width="2.4" height="1.2" fill="#303030"/><rect x="0" y="310.25" width="2.4" height="1.2" fill="#303030"/><rect x="0" y="314.67" width="2.4" height="1.2" fill="#303030"/><rect x="0" y="319.09" width="2.4" height="1.2" fill="#303030"/><rect x="0" y="323.51" width="2.4" height="1.2" fill="#303030"/><rect x="0" y="327.93" width="2.4" height="1.2" fill="#303030"/><rect x="0" y="332.35" width="2.4" height="1.2" fill="#303030"/><rect x="0" y="336.77" width="2.4" height="1.2" fill="#303030"/><rect x="0" y="341.19" width="2.4" height="1.2" fill="#303030"/><rect x="0" y="345.61" width="2.4" height="1.2" fill="#303030"/><rect x="0" y="350.03" width="2.4" height="1.2" fill="#303030"/><rect x="0" y="354.45" width="2.4" height="1.2" fill="#303030"/><rect x="0" y="358.87" width="2.4" height="1.2" fill="#303030"/><rect x="0" y="363.29" width="2.4" height="1.2" fill="#303030"/><rect x="0" y="367.71" width="2.4" height="1.2" fill="#303030"/><rect x="0" y="372.13" width="2.4" height="1.2" fill="#303030"/><rect x="0" y="376.55" width="2.4" height="1.2" fill="#303030"/><rect x="0" y="380.97" width="2.4" height="1.2" fill="#303030"/><rect x="0" y="385.39" width="2.4" height="1.2" fill="#303030"/><rect x="0" y="389.81" width="2.4" height="1.2" fill="#303030"/><rect x="0" y="394.23" width="2.4" height="1.2" fill="#303030"/><rect x="0" y="398.65" width="2.4" height="1.2" fill="#303030"/><rect x="0" y="403.07" width="2.4" height="1.2" fill="#303030"/><rect x="0" y="407.49" width="2.4" height="1.2" fill="#303030"/><rect x="0" y="411.91" width="2.4" height="1.2" fill="#303030"/><rect x="0" y="416.33" width="2.4" height="1.2" fill="#303030"/><rect x="0" y="420.75" width="2.4" height="1.2" fill="#303030"/><rect x="0" y="425.17" width="2.4" height="1.2" fill="#303030"/><rect x="0" y="429.59" width="2.4" height="1.2" fill="#303030"/><rect x="0" y="434.01" width="2.4" height="1.2" fill="#303030"/><rect x="0" y="438.43" width="2.4" height="1.2" fill="#303030"/><rect x="0" y="442.85" width="2.4" height="1.2" fill="#303030"/><rect x="0" y="447.27" width="2.4" height="1.2" fill="#303030"/><rect x="0" y="451.69" width="2.4" height="1.2" fill="#303030"/><rect x="0" y="456.11" width="2.4" height="1.2" fill="#303030"/><rect x="0" y="460.53" width="2.4" height="1.2" fill="#303030"/><rect x="0" y="464.95" width="2.4" height="1.2" fill="#303030"/><rect x="0" y="469.37" width="2.4" height="1.2" fill="#303030"/><rect x="0" y="473.79" width="2.4" height="1.2" fill="#303030"/><rect x="0" y="478.21" width="2.4" height="1.2" fill="#303030"/><rect x="0" y="482.63" width="2.4" height="1.2" fill="#303030"/><rect x="0" y="487.05" width="2.4" height="1.2" fill="#303030"/></svg></div>
<div style="position:absolute;left:80px;top:117.2px;width:834px;height:2.2px;overflow:hidden;"><svg width="834" height="2.2" style="position:absolute;left:0;top:0"><rect x="0" y="0" width="834" height="2.2" fill="#606060"/><rect x="-50.91" y="0" width="1.2" height="2.2" fill="#303030"/><rect x="-46.49" y="0" width="1.2" height="2.2" fill="#303030"/><rect x="-42.07" y="0" width="1.2" height="2.2" fill="#303030"/><rect x="-37.65" y="0" width="1.2" height="2.2" fill="#303030"/><rect x="-33.23" y="0" width="1.2" height="2.2" fill="#303030"/><rect x="-28.81" y="0" width="1.2" height="2.2" fill="#303030"/><rect x="-24.39" y="0" width="1.2" height="2.2" fill="#303030"/><rect x="-19.97" y="0" width="1.2" height="2.2" fill="#303030"/><rect x="-15.55" y="0" width="1.2" height="2.2" fill="#303030"/><rect x="-11.13" y="0" width="1.2" height="2.2" fill="#303030"/><rect x="-6.71" y="0" width="1.2" height="2.2" fill="#303030"/><rect x="-2.29" y="0" width="1.2" height="2.2" fill="#303030"/><rect x="2.13" y="0" width="1.2" height="2.2" fill="#303030"/><rect x="6.55" y="0" width="1.2" height="2.2" fill="#303030"/><rect x="10.97" y="0" width="1.2" height="2.2" fill="#303030"/><rect x="15.39" y="0" width="1.2" height="2.2" fill="#303030"/><rect x="19.81" y="0" width="1.2" height="2.2" fill="#303030"/><rect x="24.23" y="0" width="1.2" height="2.2" fill="#303030"/><rect x="28.65" y="0" width="1.2" height="2.2" fill="#303030"/><rect x="33.07" y="0" width="1.2" height="2.2" fill="#303030"/><rect x="37.49" y="0" width="1.2" height="2.2" fill="#303030"/><rect x="41.91" y="0" width="1.2" height="2.2" fill="#303030"/><rect x="46.33" y="0" width="1.2" height="2.2" fill="#303030"/><rect x="50.75" y="0" width="1.2" height="2.2" fill="#303030"/><rect x="55.17" y="0" width="1.2" height="2.2" fill="#303030"/><rect x="59.59" y="0" width="1.2" height="2.2" fill="#303030"/><rect x="64.01" y="0" width="1.2" height="2.2" fill="#303030"/><rect x="68.43" y="0" width="1.2" height="2.2" fill="#303030"/><rect x="72.85" y="0" width="1.2" height="2.2" fill="#303030"/><rect x="77.27" y="0" width="1.2" height="2.2" fill="#303030"/><rect x="81.69" y="0" width="1.2" height="2.2" fill="#303030"/><rect x="86.11" y="0" width="1.2" height="2.2" fill="#303030"/><rect x="90.53" y="0" width="1.2" height="2.2" fill="#303030"/><rect x="94.95" y="0" width="1.2" height="2.2" fill="#303030"/><rect x="99.37" y="0" width="1.2" height="2.2" fill="#303030"/><rect x="103.79" y="0" width="1.2" height="2.2" fill="#303030"/><rect x="108.21" y="0" width="1.2" height="2.2" fill="#303030"/><rect x="112.63" y="0" width="1.2" height="2.2" fill="#303030"/><rect x="117.05" y="0" width="1.2" height="2.2" fill="#303030"/><rect x="121.47" y="0" width="1.2" height="2.2" fill="#303030"/><rect x="125.89" y="0" width="1.2" height="2.2" fill="#303030"/><rect x="130.31" y="0" width="1.2" height="2.2" fill="#303030"/><rect x="134.73" y="0" width="1.2" height="2.2" fill="#303030"/><rect x="139.15" y="0" width="1.2" height="2.2" fill="#303030"/><rect x="143.57" y="0" width="1.2" height="2.2" fill="#303030"/><rect x="147.99" y="0" width="1.2" height="2.2" fill="#303030"/><rect x="152.41" y="0" width="1.2" height="2.2" fill="#303030"/><rect x="156.83" y="0" width="1.2" height="2.2" fill="#303030"/><rect x="161.25" y="0" width="1.2" height="2.2" fill="#303030"/><rect x="165.67" y="0" width="1.2" height="2.2" fill="#303030"/><rect x="170.09" y="0" width="1.2" height="2.2" fill="#303030"/><rect x="174.51" y="0" width="1.2" height="2.2" fill="#303030"/><rect x="178.93" y="0" width="1.2" height="2.2" fill="#303030"/><rect x="183.35" y="0" width="1.2" height="2.2" fill="#303030"/><rect x="187.77" y="0" width="1.2" height="2.2" fill="#303030"/><rect x="192.19" y="0" width="1.2" height="2.2" fill="#303030"/><rect x="196.61" y="0" width="1.2" height="2.2" fill="#303030"/><rect x="201.03" y="0" width="1.2" height="2.2" fill="#303030"/><rect x="205.45" y="0" width="1.2" height="2.2" fill="#303030"/><rect x="209.87" y="0" width="1.2" height="2.2" fill="#303030"/><rect x="214.29" y="0" width="1.2" height="2.2" fill="#303030"/><rect x="218.71" y="0" width="1.2" height="2.2" fill="#303030"/><rect x="223.13" y="0" width="1.2" height="2.2" fill="#303030"/><rect x="227.55" y="0" width="1.2" height="2.2" fill="#303030"/><rect x="231.97" y="0" width="1.2" height="2.2" fill="#303030"/><rect x="236.39" y="0" width="1.2" height="2.2" fill="#303030"/><rect x="240.81" y="0" width="1.2" height="2.2" fill="#303030"/><rect x="245.23" y="0" width="1.2" height="2.2" fill="#303030"/><rect x="249.65" y="0" width="1.2" height="2.2" fill="#303030"/><rect x="254.07" y="0" width="1.2" height="2.2" fill="#303030"/><rect x="258.49" y="0" width="1.2" height="2.2" fill="#303030"/><rect x="262.91" y="0" width="1.2" height="2.2" fill="#303030"/><rect x="267.33" y="0" width="1.2" height="2.2" fill="#303030"/><rect x="271.75" y="0" width="1.2" height="2.2" fill="#303030"/><rect x="276.17" y="0" width="1.2" height="2.2" fill="#303030"/><rect x="280.59" y="0" width="1.2" height="2.2" fill="#303030"/><rect x="285.01" y="0" width="1.2" height="2.2" fill="#303030"/><rect x="289.43" y="0" width="1.2" height="2.2" fill="#303030"/><rect x="293.85" y="0" width="1.2" height="2.2" fill="#303030"/><rect x="298.27" y="0" width="1.2" height="2.2" fill="#303030"/><rect x="302.69" y="0" width="1.2" height="2.2" fill="#303030"/><rect x="307.11" y="0" width="1.2" height="2.2" fill="#303030"/><rect x="311.53" y="0" width="1.2" height="2.2" fill="#303030"/><rect x="315.95" y="0" width="1.2" height="2.2" fill="#303030"/><rect x="320.37" y="0" width="1.2" height="2.2" fill="#303030"/><rect x="324.79" y="0" width="1.2" height="2.2" fill="#303030"/><rect x="329.21" y="0" width="1.2" height="2.2" fill="#303030"/><rect x="333.63" y="0" width="1.2" height="2.2" fill="#303030"/><rect x="338.05" y="0" width="1.2" height="2.2" fill="#303030"/><rect x="342.47" y="0" width="1.2" height="2.2" fill="#303030"/><rect x="346.89" y="0" width="1.2" height="2.2" fill="#303030"/><rect x="351.31" y="0" width="1.2" height="2.2" fill="#303030"/><rect x="355.73" y="0" width="1.2" height="2.2" fill="#303030"/><rect x="360.15" y="0" width="1.2" height="2.2" fill="#303030"/><rect x="364.57" y="0" width="1.2" height="2.2" fill="#303030"/><rect x="368.99" y="0" width="1.2" height="2.2" fill="#303030"/><rect x="373.41" y="0" width="1.2" height="2.2" fill="#303030"/><rect x="377.83" y="0" width="1.2" height="2.2" fill="#303030"/><rect x="382.25" y="0" width="1.2" height="2.2" fill="#303030"/><rect x="386.67" y="0" width="1.2" height="2.2" fill="#303030"/><rect x="391.09" y="0" width="1.2" height="2.2" fill="#303030"/><rect x="395.51" y="0" width="1.2" height="2.2" fill="#303030"/><rect x="399.93" y="0" width="1.2" height="2.2" fill="#303030"/><rect x="404.35" y="0" width="1.2" height="2.2" fill="#303030"/><rect x="408.77" y="0" width="1.2" height="2.2" fill="#303030"/><rect x="413.19" y="0" width="1.2" height="2.2" fill="#303030"/><rect x="417.61" y="0" width="1.2" height="2.2" fill="#303030"/><rect x="422.03" y="0" width="1.2" height="2.2" fill="#303030"/><rect x="426.45" y="0" width="1.2" height="2.2" fill="#303030"/><rect x="430.87" y="0" width="1.2" height="2.2" fill="#303030"/><rect x="435.29" y="0" width="1.2" height="2.2" fill="#303030"/><rect x="439.71" y="0" width="1.2" height="2.2" fill="#303030"/><rect x="444.13" y="0" width="1.2" height="2.2" fill="#303030"/><rect x="448.55" y="0" width="1.2" height="2.2" fill="#303030"/><rect x="452.97" y="0" width="1.2" height="2.2" fill="#303030"/><rect x="457.39" y="0" width="1.2" height="2.2" fill="#303030"/><rect x="461.81" y="0" width="1.2" height="2.2" fill="#303030"/><rect x="466.23" y="0" width="1.2" height="2.2" fill="#303030"/><rect x="470.65" y="0" width="1.2" height="2.2" fill="#303030"/><rect x="475.07" y="0" width="1.2" height="2.2" fill="#303030"/><rect x="479.49" y="0" width="1.2" height="2.2" fill="#303030"/><rect x="483.91" y="0" width="1.2" height="2.2" fill="#303030"/><rect x="488.33" y="0" width="1.2" height="2.2" fill="#303030"/><rect x="492.75" y="0" width="1.2" height="2.2" fill="#303030"/><rect x="497.17" y="0" width="1.2" height="2.2" fill="#303030"/><rect x="501.59" y="0" width="1.2" height="2.2" fill="#303030"/><rect x="506.01" y="0" width="1.2" height="2.2" fill="#303030"/><rect x="510.43" y="0" width="1.2" height="2.2" fill="#303030"/><rect x="514.85" y="0" width="1.2" height="2.2" fill="#303030"/><rect x="519.27" y="0" width="1.2" height="2.2" fill="#303030"/><rect x="523.69" y="0" width="1.2" height="2.2" fill="#303030"/><rect x="528.11" y="0" width="1.2" height="2.2" fill="#303030"/><rect x="532.53" y="0" width="1.2" height="2.2" fill="#303030"/><rect x="536.95" y="0" width="1.2" height="2.2" fill="#303030"/><rect x="541.37" y="0" width="1.2" height="2.2" fill="#303030"/><rect x="545.79" y="0" width="1.2" height="2.2" fill="#303030"/><rect x="550.21" y="0" width="1.2" height="2.2" fill="#303030"/><rect x="554.63" y="0" width="1.2" height="2.2" fill="#303030"/><rect x="559.05" y="0" width="1.2" height="2.2" fill="#303030"/><rect x="563.47" y="0" width="1.2" height="2.2" fill="#303030"/><rect x="567.89" y="0" width="1.2" height="2.2" fill="#303030"/><rect x="572.31" y="0" width="1.2" height="2.2" fill="#303030"/><rect x="576.73" y="0" width="1.2" height="2.2" fill="#303030"/><rect x="581.15" y="0" width="1.2" height="2.2" fill="#303030"/><rect x="585.57" y="0" width="1.2" height="2.2" fill="#303030"/><rect x="589.99" y="0" width="1.2" height="2.2" fill="#303030"/><rect x="594.41" y="0" width="1.2" height="2.2" fill="#303030"/><rect x="598.83" y="0" width="1.2" height="2.2" fill="#303030"/><rect x="603.25" y="0" width="1.2" height="2.2" fill="#303030"/><rect x="607.67" y="0" width="1.2" height="2.2" fill="#303030"/><rect x="612.09" y="0" width="1.2" height="2.2" fill="#303030"/><rect x="616.51" y="0" width="1.2" height="2.2" fill="#303030"/><rect x="620.93" y="0" width="1.2" height="2.2" fill="#303030"/><rect x="625.35" y="0" width="1.2" height="2.2" fill="#303030"/><rect x="629.77" y="0" width="1.2" height="2.2" fill="#303030"/><rect x="634.19" y="0" width="1.2" height="2.2" fill="#303030"/><rect x="638.61" y="0" width="1.2" height="2.2" fill="#303030"/><rect x="643.03" y="0" width="1.2" height="2.2" fill="#303030"/><rect x="647.45" y="0" width="1.2" height="2.2" fill="#303030"/><rect x="651.87" y="0" width="1.2" height="2.2" fill="#303030"/><rect x="656.29" y="0" width="1.2" height="2.2" fill="#303030"/><rect x="660.71" y="0" width="1.2" height="2.2" fill="#303030"/><rect x="665.13" y="0" width="1.2" height="2.2" fill="#303030"/><rect x="669.55" y="0" width="1.2" height="2.2" fill="#303030"/><rect x="673.97" y="0" width="1.2" height="2.2" fill="#303030"/><rect x="678.39" y="0" width="1.2" height="2.2" fill="#303030"/><rect x="682.81" y="0" width="1.2" height="2.2" fill="#303030"/><rect x="687.23" y="0" width="1.2" height="2.2" fill="#303030"/><rect x="691.65" y="0" width="1.2" height="2.2" fill="#303030"/><rect x="696.07" y="0" width="1.2" height="2.2" fill="#303030"/><rect x="700.49" y="0" width="1.2" height="2.2" fill="#303030"/><rect x="704.91" y="0" width="1.2" height="2.2" fill="#303030"/><rect x="709.33" y="0" width="1.2" height="2.2" fill="#303030"/><rect x="713.75" y="0" width="1.2" height="2.2" fill="#303030"/><rect x="718.17" y="0" width="1.2" height="2.2" fill="#303030"/><rect x="722.59" y="0" width="1.2" height="2.2" fill="#303030"/><rect x="727.01" y="0" width="1.2" height="2.2" fill="#303030"/><rect x="731.43" y="0" width="1.2" height="2.2" fill="#303030"/><rect x="735.85" y="0" width="1.2" height="2.2" fill="#303030"/><rect x="740.27" y="0" width="1.2" height="2.2" fill="#303030"/><rect x="744.69" y="0" width="1.2" height="2.2" fill="#303030"/><rect x="749.11" y="0" width="1.2" height="2.2" fill="#303030"/><rect x="753.53" y="0" width="1.2" height="2.2" fill="#303030"/><rect x="757.95" y="0" width="1.2" height="2.2" fill="#303030"/><rect x="762.37" y="0" width="1.2" height="2.2" fill="#303030"/><rect x="766.79" y="0" width="1.2" height="2.2" fill="#303030"/><rect x="771.21" y="0" width="1.2" height="2.2" fill="#303030"/><rect x="775.63" y="0" width="1.2" height="2.2" fill="#303030"/><rect x="780.05" y="0" width="1.2" height="2.2" fill="#303030"/><rect x="784.47" y="0" width="1.2" height="2.2" fill="#303030"/><rect x="788.89" y="0" width="1.2" height="2.2" fill="#303030"/><rect x="793.31" y="0" width="1.2" height="2.2" fill="#303030"/><rect x="797.73" y="0" width="1.2" height="2.2" fill="#303030"/><rect x="802.15" y="0" width="1.2" height="2.2" fill="#303030"/><rect x="806.57" y="0" width="1.2" height="2.2" fill="#303030"/><rect x="810.99" y="0" width="1.2" height="2.2" fill="#303030"/><rect x="815.41" y="0" width="1.2" height="2.2" fill="#303030"/><rect x="819.83" y="0" width="1.2" height="2.2" fill="#303030"/><rect x="824.25" y="0" width="1.2" height="2.2" fill="#303030"/><rect x="828.67" y="0" width="1.2" height="2.2" fill="#303030"/><rect x="833.09" y="0" width="1.2" height="2.2" fill="#303030"/><rect x="837.51" y="0" width="1.2" height="2.2" fill="#303030"/><rect x="841.93" y="0" width="1.2" height="2.2" fill="#303030"/><rect x="846.35" y="0" width="1.2" height="2.2" fill="#303030"/></svg></div>
<div style="position:absolute;left:180.2px;top:124.2px;width:630.8px;height:451.6px;border:1px solid #c95d69;"></div>
<div style="position:absolute;left:186.3px;top:130.5px;width:620.5px;height:441px;background:#1a1a1a;"></div>
<div style="position:absolute;left:187.1px;top:131.4px;width:618.4px;height:438.7px;background:#fff;"></div>
<div style="position:absolute;left:496.1px;top:131.4px;width:1px;height:438.7px;background:#666;"></div>
<div style="position:absolute;left:187.1px;top:170.05px;width:618.4px;height:1.7px;background:#6ff6fa;"></div>
<div style="position:absolute;left:187.1px;top:519.55px;width:618.4px;height:1.7px;background:#6ff6fa;"></div>
<div style="position:absolute;left:225.65px;top:131.4px;width:1.7px;height:438.70000000000005px;background:#6ff6fa;"></div>
<div style="position:absolute;left:442.25px;top:131.4px;width:1.7px;height:438.70000000000005px;background:#6ff6fa;"></div>
<div style="position:absolute;left:548.55px;top:131.4px;width:1.7px;height:438.70000000000005px;background:#6ff6fa;"></div>
<div style="position:absolute;left:765.05px;top:131.4px;width:1.7px;height:438.70000000000005px;background:#6ff6fa;"></div>
<div style="position:absolute;left:227.5px;top:170.05px;width:214.60000000000002px;height:1.7px;background:#f5a3f7;"></div>
<div style="position:absolute;left:225.65px;top:171.9px;width:1.7px;height:347.5px;background:#c79bf9;"></div>
<div style="position:absolute;left:442.25px;top:171.9px;width:1.7px;height:347.5px;background:#c79bf9;"></div>
<div style="position:absolute;left:227.5px;top:519.55px;width:214.60000000000002px;height:1.7px;background:#f5a3f7;"></div>
<div style="position:absolute;left:550.4px;top:170.05px;width:214.5px;height:1.7px;background:#f5a3f7;"></div>
<div style="position:absolute;left:548.55px;top:171.9px;width:1.7px;height:347.5px;background:#c79bf9;"></div>
<div style="position:absolute;left:765.05px;top:171.9px;width:1.7px;height:347.5px;background:#c79bf9;"></div>
<div style="position:absolute;left:550.4px;top:519.55px;width:214.5px;height:1.7px;background:#f5a3f7;"></div>
<div style="position:absolute;left:550.4px;top:521.4px;width:214.5px;height:1.6px;background:#6ff6fa;"></div>
<div style="position:absolute;left:227.5px;top:388.6px;width:214.60000000000002px;height:1.5px;background:#6ff6fa;"></div>
<svg style="position:absolute;left:228.4px;top:153.6px;" width="213.6" height="9.6" viewBox="0 0 213.6 9.6"><line x1="0" y1="0.55" x2="213.6" y2="0.55" stroke="#ffa0a0" stroke-width="1.1" stroke-dasharray="1.2 1.55"/><line x1="0" y1="9.049999999999999" x2="213.6" y2="9.049999999999999" stroke="#ffa0a0" stroke-width="1.1" stroke-dasharray="1.2 1.55"/></svg>
<svg style="position:absolute;left:550.6px;top:153.6px;" width="214" height="9.6" viewBox="0 0 214 9.6"><line x1="0" y1="0.55" x2="214" y2="0.55" stroke="#ffa0a0" stroke-width="1.1" stroke-dasharray="1.2 1.55"/><line x1="0" y1="9.049999999999999" x2="214" y2="9.049999999999999" stroke="#ffa0a0" stroke-width="1.1" stroke-dasharray="1.2 1.55"/></svg>
<svg style="position:absolute;left:226.8px;top:529.6px;" width="76.2" height="10.2" viewBox="0 0 76.2 10.2"><line x1="0" y1="0.55" x2="76.2" y2="0.55" stroke="#ff8080" stroke-width="1.1" stroke-dasharray="1.2 1.55"/><line x1="0" y1="9.649999999999999" x2="76.2" y2="9.649999999999999" stroke="#ff8080" stroke-width="1.1" stroke-dasharray="1.2 1.55"/><line x1="0.55" y1="0" x2="0.55" y2="10.2" stroke="#ff8080" stroke-width="1.1" stroke-dasharray="1.2 1.55"/><line x1="75.65" y1="0" x2="75.65" y2="10.2" stroke="#ff8080" stroke-width="1.1" stroke-dasharray="1.2 1.55"/></svg>
<svg style="position:absolute;left:689.2px;top:529.6px;" width="75.8" height="10.2" viewBox="0 0 75.8 10.2"><line x1="0" y1="0.55" x2="75.8" y2="0.55" stroke="#ff8080" stroke-width="1.1" stroke-dasharray="1.2 1.55"/><line x1="0" y1="9.649999999999999" x2="75.8" y2="9.649999999999999" stroke="#ff8080" stroke-width="1.1" stroke-dasharray="1.2 1.55"/><line x1="0.55" y1="0" x2="0.55" y2="10.2" stroke="#ff8080" stroke-width="1.1" stroke-dasharray="1.2 1.55"/><line x1="75.25" y1="0" x2="75.25" y2="10.2" stroke="#ff8080" stroke-width="1.1" stroke-dasharray="1.2 1.55"/></svg>
<div id="f11" class="t" style="left:316.2px;top:155.87px;font-size:5.7px;line-height:5.7px;color:#808080;font-weight:normal;font-family:'Liberation Sans',sans-serif;transform:scaleX(0.8547);transform-origin:0 0;-webkit-text-stroke:0.2px #808080;">CHRIS WARREN</div>
<div id="f12" class="t" style="left:605.3px;top:155.87px;font-size:5.7px;line-height:5.7px;color:#888;font-weight:normal;font-family:'Liberation Sans',sans-serif;transform:scaleX(0.8645);transform-origin:0 0;-webkit-text-stroke:0.18px #888;">COMMUNICATIONS IN CREATIVE CULTURES</div>
<div id="f13" class="t" style="left:227.2px;top:531.78px;font-size:6.4px;line-height:6.4px;color:#444;font-weight:normal;font-family:'Liberation Sans',sans-serif;transform:scaleX(0.9846);transform-origin:0 0;-webkit-text-stroke:0.2px #444;">34</div>
<div id="f14" class="t" style="left:757.4px;top:531.78px;font-size:6.4px;line-height:6.4px;color:#444;font-weight:normal;font-family:'Liberation Sans',sans-serif;transform:scaleX(0.9705);transform-origin:0 0;-webkit-text-stroke:0.2px #444;">35</div>
<div id="f15" class="t" style="left:238.1px;top:172.07px;font-size:6.3px;line-height:6.3px;color:#000;font-weight:bold;font-family:'Liberation Sans',sans-serif;transform:scaleX(0.8011);transform-origin:0 0;-webkit-text-stroke:0.16px #000;">The sculpture transforms Aotea Square into a marae. Muru says its purpose is to</div>
<div id="f16" class="t" style="left:226.9px;top:183.83px;font-size:6.3px;line-height:6.3px;color:#000;font-weight:bold;font-family:'Liberation Sans',sans-serif;transform:scaleX(0.8129);transform-origin:0 0;-webkit-text-stroke:0.16px #000;">“welcome and embrace manuhiri to Aotea Square” and he used wood because it “has</div>
<div id="f17" class="t" style="left:226.9px;top:195.59px;font-size:6.3px;line-height:6.3px;color:#000;font-weight:bold;font-family:'Liberation Sans',sans-serif;transform:scaleX(0.8196);transform-origin:0 0;-webkit-text-stroke:0.16px #000;">Mauri (life force) of its own that would exude warmth in an environment dominated by</div>
<div id="f18" class="t" style="left:226.9px;top:207.35px;font-size:6.3px;line-height:6.3px;color:#000;font-weight:bold;font-family:'Liberation Sans',sans-serif;transform:scaleX(0.8033);transform-origin:0 0;-webkit-text-stroke:0.16px #000;">steel, glass and stone” (qtd. in Werner, Scherer, and Findlay). Because Muru is tangata</div>
<div id="f19" class="t" style="left:226.9px;top:219.11px;font-size:6.3px;line-height:6.3px;color:#000;font-weight:bold;font-family:'Liberation Sans',sans-serif;transform:scaleX(0.8177);transform-origin:0 0;-webkit-text-stroke:0.16px #000;">whenua, he can easily identify with and understand tikanga. He understands the</div>
<div id="f20" class="t" style="left:226.9px;top:230.87px;font-size:6.3px;line-height:6.3px;color:#000;font-weight:bold;font-family:'Liberation Sans',sans-serif;transform:scaleX(0.8080);transform-origin:0 0;-webkit-text-stroke:0.16px #000;">protocols behind using Māori symbols and different materials.</div>
<div id="f21" class="t" style="left:238.7px;top:242.63px;font-size:6.3px;line-height:6.3px;color:#000;font-weight:bold;font-family:'Liberation Sans',sans-serif;transform:scaleX(0.8016);transform-origin:0 0;-webkit-text-stroke:0.16px #000;">Māori have a strong connection to the forest because of its abundance of resources.</div>
<div id="f22" class="t" style="left:226.9px;top:254.39px;font-size:6.3px;line-height:6.3px;color:#000;font-weight:bold;font-family:'Liberation Sans',sans-serif;transform:scaleX(0.8103);transform-origin:0 0;-webkit-text-stroke:0.16px #000;">They have traditionally used the forest as a source of food, materials for weaving</div>
<div id="f23" class="t" style="left:226.9px;top:266.15px;font-size:6.3px;line-height:6.3px;color:#000;font-weight:bold;font-family:'Liberation Sans',sans-serif;transform:scaleX(0.8141);transform-origin:0 0;-webkit-text-stroke:0.16px #000;">and building, and medicine (Taonui par. 1). In fact, Māori give the tallest trees chiefly</div>
<div id="f24" class="t" style="left:226.9px;top:277.91px;font-size:6.3px;line-height:6.3px;color:#000;font-weight:bold;font-family:'Liberation Sans',sans-serif;transform:scaleX(0.8122);transform-origin:0 0;-webkit-text-stroke:0.16px #000;">statuses, equal to the highest social rank within an iwi (Orwin par. 1). Unlike Smith and</div>
<div id="f25" class="t" style="left:226.9px;top:289.67px;font-size:6.3px;line-height:6.3px;color:#000;font-weight:bold;font-family:'Liberation Sans',sans-serif;transform:scaleX(0.7901);transform-origin:0 0;-webkit-text-stroke:0.16px #000;">his decisions behind using the moko in Heritage, Muru understood the Māori tradition</div>
<div id="f26" class="t" style="left:226.9px;top:301.43px;font-size:6.3px;line-height:6.3px;color:#000;font-weight:bold;font-family:'Liberation Sans',sans-serif;transform:scaleX(0.8148);transform-origin:0 0;-webkit-text-stroke:0.16px #000;">behind the imagery and materials he chose for his artwork. He has knowledge of and</div>
<div id="f27" class="t" style="left:226.9px;top:313.19px;font-size:6.3px;line-height:6.3px;color:#000;font-weight:bold;font-family:'Liberation Sans',sans-serif;transform:scaleX(0.8129);transform-origin:0 0;-webkit-text-stroke:0.16px #000;">respect for Mātauranga Māori. Muru’s right to tell Māori stories and work with Māori</div>
<div id="f28" class="t" style="left:226.9px;top:324.95px;font-size:6.3px;line-height:6.3px;color:#000;font-weight:bold;font-family:'Liberation Sans',sans-serif;transform:scaleX(0.8046);transform-origin:0 0;-webkit-text-stroke:0.16px #000;">images and symbols comes from birth. This is unlike Pākehā artists who have to earn</div>
<div id="f29" class="t" style="left:226.9px;top:336.71px;font-size:6.3px;line-height:6.3px;color:#000;font-weight:bold;font-family:'Liberation Sans',sans-serif;transform:scaleX(0.8105);transform-origin:0 0;-webkit-text-stroke:0.16px #000;">that right (Panoho 129).</div>
<div id="f30" class="t" style="left:238.7px;top:348.47px;font-size:6.3px;line-height:6.3px;color:#000;font-weight:bold;font-family:'Liberation Sans',sans-serif;transform:scaleX(0.8150);transform-origin:0 0;-webkit-text-stroke:0.16px #000;">If artists understand tikanga and the responsibilities of working with tangata</div>
<div id="f31" class="t" style="left:226.9px;top:360.23px;font-size:6.3px;line-height:6.3px;color:#000;font-weight:bold;font-family:'Liberation Sans',sans-serif;transform:scaleX(0.8239);transform-origin:0 0;-webkit-text-stroke:0.16px #000;">whenua and working in a Māori environment, they will produce artworks that do not</div>
<div id="f32" class="t" style="left:226.9px;top:371.99px;font-size:6.3px;line-height:6.3px;color:#000;font-weight:bold;font-family:'Liberation Sans',sans-serif;transform:scaleX(0.8211);transform-origin:0 0;-webkit-text-stroke:0.16px #000;">offend Māori, do not misappropriate or misrepresent Māori culture, and will be able to</div>
<div id="f33" class="t" style="left:226.9px;top:383.75px;font-size:6.3px;line-height:6.3px;color:#000;font-weight:bold;font-family:'Liberation Sans',sans-serif;transform:scaleX(0.8217);transform-origin:0 0;-webkit-text-stroke:0.16px #000;">have a respectful relationship with tangata whenua.</div>
<div style="position:absolute;left:550.4px;top:187.2px;width:214.5px;height:1.3px;background:#8ff6fa;"></div>
<div style="position:absolute;left:550.4px;top:254.5px;width:214.5px;height:1.3px;background:#8ff6fa;"></div>
<div style="position:absolute;left:550.4px;top:318.8px;width:214.5px;height:1.3px;background:#8ff6fa;"></div>
<div style="position:absolute;left:550.4px;top:361.09999999999997px;width:214.5px;height:1.3px;background:#8ff6fa;"></div>
<div style="position:absolute;left:550.4px;top:391.9px;width:214.5px;height:1.3px;background:#8ff6fa;"></div>
<div style="position:absolute;left:550.4px;top:444.09999999999997px;width:214.5px;height:1.3px;background:#8ff6fa;"></div>
<div style="position:absolute;left:550.4px;top:498.09999999999997px;width:214.5px;height:1.3px;background:#8ff6fa;"></div>
<div style="position:absolute;left:606.8px;top:187.2px;width:1.3px;height:332.2px;background:#8ff6fa;"></div>
<div id="f34" class="t" style="left:560px;top:172.81px;font-size:5.9px;line-height:5.9px;color:#000;font-weight:bold;font-family:'Liberation Sans',sans-serif;transform:scaleX(0.7177);transform-origin:0 0;-webkit-text-stroke:0.12px #000;">Glossary</div>
<div id="f35" class="t" style="left:562.7px;top:195.91px;font-size:5.9px;line-height:5.9px;color:#000;font-weight:bold;font-family:'Liberation Sans',sans-serif;transform:scaleX(0.8035);transform-origin:0 0;-webkit-text-stroke:0.12px #000;">Ea</div>
<div id="f36" class="t" style="left:609.7px;top:195.91px;font-size:5.9px;line-height:5.9px;color:#000;font-weight:bold;font-family:'Liberation Sans',sans-serif;transform:scaleX(0.7659);transform-origin:0 0;-webkit-text-stroke:0.12px #000;">Ea occurs when the relationship between two parties has been</div>
<div id="f37" class="t" style="left:609.7px;top:207.56px;font-size:5.9px;line-height:5.9px;color:#000;font-weight:bold;font-family:'Liberation Sans',sans-serif;transform:scaleX(0.7669);transform-origin:0 0;-webkit-text-stroke:0.12px #000;">upset and needs to be restored. New Zealand anthropologist Sidney</div>
<div id="f38" class="t" style="left:609.7px;top:219.21px;font-size:5.9px;line-height:5.9px;color:#000;font-weight:bold;font-family:'Liberation Sans',sans-serif;transform:scaleX(0.7512);transform-origin:0 0;-webkit-text-stroke:0.12px #000;">Moko Mead says “the notion of ea to indicate the successful closing</div>
<div id="f39" class="t" style="left:609.7px;top:230.86px;font-size:5.9px;line-height:5.9px;color:#000;font-weight:bold;font-family:'Liberation Sans',sans-serif;transform:scaleX(0.7599);transform-origin:0 0;-webkit-text-stroke:0.12px #000;">of a sequence and the restoration of relationships... is a value that</div>
<div id="f40" class="t" style="left:609.7px;top:242.51px;font-size:5.9px;line-height:5.9px;color:#000;font-weight:bold;font-family:'Liberation Sans',sans-serif;transform:scaleX(0.7607);transform-origin:0 0;-webkit-text-stroke:0.12px #000;">underpins most tikanga (Mead 31).</div>
<div id="f41" class="t" style="left:562.7px;top:260.91px;font-size:5.9px;line-height:5.9px;color:#000;font-weight:bold;font-family:'Liberation Sans',sans-serif;transform:scaleX(0.7701);transform-origin:0 0;-webkit-text-stroke:0.12px #000;">Mana</div>
<div id="f42" class="t" style="left:609.7px;top:260.91px;font-size:5.9px;line-height:5.9px;color:#000;font-weight:bold;font-family:'Liberation Sans',sans-serif;transform:scaleX(0.7658);transform-origin:0 0;-webkit-text-stroke:0.12px #000;">Māori scholar and bishop Herbert William Williams in 1957 defined</div>
<div id="f43" class="t" style="left:609.7px;top:272.54px;font-size:5.9px;line-height:5.9px;color:#000;font-weight:bold;font-family:'Liberation Sans',sans-serif;transform:scaleX(0.7694);transform-origin:0 0;-webkit-text-stroke:0.12px #000;">mana with English equivalents: “‘authority, control; ‘influence,</div>
<div id="f44" class="t" style="left:609.7px;top:284.17px;font-size:5.9px;line-height:5.9px;color:#000;font-weight:bold;font-family:'Liberation Sans',sans-serif;transform:scaleX(0.7555);transform-origin:0 0;-webkit-text-stroke:0.12px #000;">prestige, power’; ‘psychic force’; ‘effectual, binding, authoritative’” (qtd.</div>
<div id="f45" class="t" style="left:609.7px;top:295.80px;font-size:5.9px;line-height:5.9px;color:#000;font-weight:bold;font-family:'Liberation Sans',sans-serif;transform:scaleX(0.7552);transform-origin:0 0;-webkit-text-stroke:0.12px #000;">in Mead 29). Mana is power, status. The more prestigious something is,</div>
<div id="f46" class="t" style="left:609.7px;top:307.43px;font-size:5.9px;line-height:5.9px;color:#000;font-weight:bold;font-family:'Liberation Sans',sans-serif;transform:scaleX(0.7777);transform-origin:0 0;-webkit-text-stroke:0.12px #000;">the more mana it has.</div>
<div id="f47" class="t" style="left:562.7px;top:326.21px;font-size:5.9px;line-height:5.9px;color:#000;font-weight:bold;font-family:'Liberation Sans',sans-serif;transform:scaleX(0.7775);transform-origin:0 0;-webkit-text-stroke:0.12px #000;">Manaakitanga</div>
<div id="f48" class="t" style="left:609.7px;top:326.21px;font-size:5.9px;line-height:5.9px;color:#000;font-weight:bold;font-family:'Liberation Sans',sans-serif;transform:scaleX(0.7671);transform-origin:0 0;-webkit-text-stroke:0.12px #000;">An integral part of tikanga, manaakitanga is treating people with</div>
<div id="f49" class="t" style="left:609.7px;top:337.56px;font-size:5.9px;line-height:5.9px;color:#000;font-weight:bold;font-family:'Liberation Sans',sans-serif;transform:scaleX(0.7769);transform-origin:0 0;-webkit-text-stroke:0.12px #000;">respect and in a culturally appropriate way, look after one another and</div>
<div id="f50" class="t" style="left:609.7px;top:348.91px;font-size:5.9px;line-height:5.9px;color:#000;font-weight:bold;font-family:'Liberation Sans',sans-serif;transform:scaleX(0.7634);transform-origin:0 0;-webkit-text-stroke:0.12px #000;">“nurturing relationships” (Mead 29). Manaakitanga is hospitality.</div>
<div id="f51" class="t" style="left:562.7px;top:367.41px;font-size:5.9px;line-height:5.9px;color:#000;font-weight:bold;font-family:'Liberation Sans',sans-serif;transform:scaleX(0.7863);transform-origin:0 0;-webkit-text-stroke:0.12px #000;">Manuhiri</div>
<div id="f52" class="t" style="left:609.7px;top:367.41px;font-size:5.9px;line-height:5.9px;color:#000;font-weight:bold;font-family:'Liberation Sans',sans-serif;transform:scaleX(0.7548);transform-origin:0 0;-webkit-text-stroke:0.12px #000;">Visitors or guests, particularly the visitors on a marae who are looked</div>
<div id="f53" class="t" style="left:609.7px;top:378.91px;font-size:5.9px;line-height:5.9px;color:#000;font-weight:bold;font-family:'Liberation Sans',sans-serif;transform:scaleX(0.7653);transform-origin:0 0;-webkit-text-stroke:0.12px #000;">after and fed by tangata whenua (Higgins and Moorfield 76).</div>
<div id="f54" class="t" style="left:562.7px;top:396.41px;font-size:5.9px;line-height:5.9px;color:#000;font-weight:bold;font-family:'Liberation Sans',sans-serif;transform:scaleX(0.7899);transform-origin:0 0;-webkit-text-stroke:0.12px #000;">Noa</div>
<div id="f55" class="t" style="left:609.7px;top:396.41px;font-size:5.9px;line-height:5.9px;color:#000;font-weight:bold;font-family:'Liberation Sans',sans-serif;transform:scaleX(0.7667);transform-origin:0 0;-webkit-text-stroke:0.12px #000;">Noa goes hand-in-hand with ea, and indicates the restoration of</div>
<div id="f56" class="t" style="left:609.7px;top:408.31px;font-size:5.9px;line-height:5.9px;color:#000;font-weight:bold;font-family:'Liberation Sans',sans-serif;transform:scaleX(0.7675);transform-origin:0 0;-webkit-text-stroke:0.12px #000;">balance of tapu (Mead 12). Noa might be applied at the unveiling of a</div>
<div id="f57" class="t" style="left:609.7px;top:420.21px;font-size:5.9px;line-height:5.9px;color:#000;font-weight:bold;font-family:'Liberation Sans',sans-serif;transform:scaleX(0.7732);transform-origin:0 0;-webkit-text-stroke:0.12px #000;">new marae. The tapu from the marae would be lifted, thus allowing</div>
<div id="f58" class="t" style="left:609.7px;top:432.11px;font-size:5.9px;line-height:5.9px;color:#000;font-weight:bold;font-family:'Liberation Sans',sans-serif;transform:scaleX(0.7713);transform-origin:0 0;-webkit-text-stroke:0.12px #000;">people to enter and interact with the building.</div>
<div id="f59" class="t" style="left:562.7px;top:450.11px;font-size:5.9px;line-height:5.9px;color:#000;font-weight:bold;font-family:'Liberation Sans',sans-serif;transform:scaleX(0.7765);transform-origin:0 0;-webkit-text-stroke:0.12px #000;">Tangata whenua</div>
<div id="f60" class="t" style="left:609.7px;top:450.11px;font-size:5.9px;line-height:5.9px;color:#000;font-weight:bold;font-family:'Liberation Sans',sans-serif;transform:scaleX(0.7619);transform-origin:0 0;-webkit-text-stroke:0.12px #000;">Literally “people of the land”, tangata whenua “are those who have</div>
<div id="f61" class="t" style="left:609.7px;top:461.68px;font-size:5.9px;line-height:5.9px;color:#000;font-weight:bold;font-family:'Liberation Sans',sans-serif;transform:scaleX(0.7713);transform-origin:0 0;-webkit-text-stroke:0.12px #000;">authority in a particular place... based on their deep relationship with</div>
<div id="f62" class="t" style="left:609.7px;top:473.25px;font-size:5.9px;line-height:5.9px;color:#000;font-weight:bold;font-family:'Liberation Sans',sans-serif;transform:scaleX(0.7613);transform-origin:0 0;-webkit-text-stroke:0.12px #000;">that place, through their births and their ancestors’ births” (Royal,</div>
<div id="f63" class="t" style="left:609.7px;top:484.82px;font-size:5.9px;line-height:5.9px;color:#000;font-weight:bold;font-family:'Liberation Sans',sans-serif;transform:scaleX(0.7397);transform-origin:0 0;-webkit-text-stroke:0.12px #000;">“Papatūānuku: The Land” par. 3).</div>
<div id="f64" class="t" style="left:562.7px;top:502.81px;font-size:5.9px;line-height:5.9px;color:#000;font-weight:bold;font-family:'Liberation Sans',sans-serif;transform:scaleX(0.7991);transform-origin:0 0;-webkit-text-stroke:0.12px #000;">Tapu</div>
<div id="f65" class="t" style="left:609.7px;top:502.81px;font-size:5.9px;line-height:5.9px;color:#000;font-weight:bold;font-family:'Liberation Sans',sans-serif;transform:scaleX(0.7567);transform-origin:0 0;-webkit-text-stroke:0.12px #000;">The sacredness of particular places, buildings, words, people and</div>
<div id="f66" class="t" style="left:609.7px;top:514.41px;font-size:5.9px;line-height:5.9px;color:#000;font-weight:bold;font-family:'Liberation Sans',sans-serif;transform:scaleX(0.7753);transform-origin:0 0;-webkit-text-stroke:0.12px #000;">tikanga (Mead 30).</div>
<div style="position:absolute;left:46px;top:99.3px;width:13.6px;height:1.9px;background:#464646;"></div>
<svg style="position:absolute;left:42.5px;top:90.6px" width="6" height="4.5"><polyline points="0.6,0.3 2.3,2.2 0.6,4.1" fill="none" stroke="#aaa" stroke-width="0.8"/><polyline points="3.6,0.3 5.3,2.2 3.6,4.1" fill="none" stroke="#aaa" stroke-width="0.8"/></svg>
<div style="position:absolute;left:43.2px;top:107.2px;width:19.2px;height:15.5px;background:#393939;border-radius:2px;"></div>
<svg style="position:absolute;left:48px;top:108px;" width="11" height="14" viewBox="0 0 11 14"><path d="M1.6 1.6 L9.6 9 L4.8 9.3 L1.6 12.4 Z" fill="none" stroke="#c8c8c8" stroke-width="1.1" stroke-linejoin="round"/></svg>
<svg style="position:absolute;left:48px;top:125px;" width="11" height="14" viewBox="0 0 11 14"><path d="M1.5 1.2 L9.8 8.9 L4.8 9.2 L1.5 12.8 Z" fill="#c8c8c8"/></svg>
<svg style="position:absolute;left:47.5px;top:142px;" width="11" height="11.5" viewBox="0 0 11 11.5"><path d="M0.6 0.6H4.5L7 3V6" fill="none" stroke="#c8c8c8" stroke-width="1"/><path d="M0.6 0.6V10.5H5" fill="none" stroke="#c8c8c8" stroke-width="1"/><path d="M6 5.5 L10.5 8.6 L8.2 8.9 L7 11 Z" fill="#c8c8c8"/><path d="M4.5 0.6V3H7" fill="none" stroke="#c8c8c8" stroke-width="0.8"/></svg>
<svg style="position:absolute;left:46.5px;top:159px;" width="13" height="11" viewBox="0 0 13 11"><line x1="0.8" y1="0" x2="0.8" y2="11" stroke="#c8c8c8" stroke-width="1.2"/><line x1="12.2" y1="0" x2="12.2" y2="11" stroke="#c8c8c8" stroke-width="1.2"/><line x1="2.5" y1="5.5" x2="10.5" y2="5.5" stroke="#c8c8c8" stroke-width="1"/><path d="M2.3 5.5L4.3 3.7V7.3Z M10.7 5.5L8.7 3.7V7.3Z" fill="#c8c8c8"/></svg>
<svg style="position:absolute;left:47.3px;top:175.5px;" width="12" height="11" viewBox="0 0 12 11"><path d="M0.6 4.5V10.4H10.4V4.5" fill="none" stroke="#c8c8c8" stroke-width="1"/><rect x="2.2" y="6.5" width="6.6" height="2.6" fill="#c8c8c8"/><path d="M2.5 0.5 L6 3.8 M6 3.8 L6 1.8 M6 3.8 L4 3.8" stroke="#c8c8c8" stroke-width="1" fill="none"/></svg>
<svg style="position:absolute;left:60.3px;top:184.9px;" width="3" height="3" viewBox="0 0 3 3"><path d="M3 0V3H0Z" fill="#c8c8c8"/></svg>
<div style="position:absolute;left:41px;top:191px;width:24px;height:1px;background:#494949;"></div>
<div class="t" style="left:47.1px;top:194.2px;font-family:'Liberation Serif',serif;font-weight:bold;font-size:14.5px;line-height:14px;color:#c8c8c8;">T</div>
<svg style="position:absolute;left:59.099999999999994px;top:204.5px;" width="3" height="3" viewBox="0 0 3 3"><path d="M3 0V3H0Z" fill="#c8c8c8"/></svg>
<svg style="position:absolute;left:46.5px;top:210.5px;" width="13" height="13" viewBox="0 0 13 13"><line x1="1.4" y1="11.3" x2="11.7" y2="1.6" stroke="#c8c8c8" stroke-width="1.2"/></svg>
<svg style="position:absolute;left:43px;top:225px;" width="18" height="17" viewBox="0 0 18 17"><path d="M1.7 6H7.5M4.6 3.1V8.9" stroke="#c8c8c8" stroke-width="1.3"/><g transform="translate(11.5,9.2) rotate(45)"><path d="M0 7.8 L-3.3 1.8 Q-3.5 -1.3 -2.7 -2.6 H2.7 Q3.5 -1.3 3.3 1.8 Z" fill="#c8c8c8"/><circle cx="0" cy="1.6" r="0.9" fill="#535353"/><line x1="0" y1="1.6" x2="0" y2="7.6" stroke="#535353" stroke-width="0.6"/><rect x="-2.4" y="-7.2" width="4.8" height="3.6" fill="#c8c8c8"/></g></svg>
<svg style="position:absolute;left:59.099999999999994px;top:237.20000000000002px;" width="3" height="3" viewBox="0 0 3 3"><path d="M3 0V3H0Z" fill="#c8c8c8"/></svg>
<svg style="position:absolute;left:44px;top:242px;" width="16" height="16" viewBox="0 0 16 16"><g transform="translate(8.8,8.4) rotate(45)"><rect x="-2.3" y="-7.6" width="4.6" height="11" fill="#c8c8c8"/><path d="M-2.3 3.4 L0 7.9 L2.3 3.4 Z" fill="#c8c8c8"/><line x1="-2.3" y1="-5.2" x2="2.3" y2="-5.2" stroke="#535353" stroke-width="0.7"/><path d="M-0.8 6.2 L0 7.9 L0.8 6.2Z" fill="#555"/></g></svg>
<svg style="position:absolute;left:59.099999999999994px;top:253.6px;" width="3" height="3" viewBox="0 0 3 3"><path d="M3 0V3H0Z" fill="#c8c8c8"/></svg>
<svg style="position:absolute;left:46.6px;top:262px;" width="12" height="10.2" viewBox="0 0 12 10.2"><rect x="0.6" y="0.6" width="10.8" height="9" fill="none" stroke="#c8c8c8" stroke-width="1.1"/><path d="M0.6 0.6L11.4 9.6M11.4 0.6L0.6 9.6" stroke="#c8c8c8" stroke-width="0.9"/></svg>
<svg style="position:absolute;left:60.3px;top:270.9px;" width="3" height="3" viewBox="0 0 3 3"><path d="M3 0V3H0Z" fill="#c8c8c8"/></svg>
<svg style="position:absolute;left:45.5px;top:278.5px;" width="14" height="11" viewBox="0 0 14 11"><ellipse cx="7" cy="5.5" rx="6.3" ry="4.8" fill="#707070" stroke="#c8c8c8" stroke-width="1"/></svg>
<svg style="position:absolute;left:60.3px;top:287.4px;" width="3" height="3" viewBox="0 0 3 3"><path d="M3 0V3H0Z" fill="#c8c8c8"/></svg>
<div style="position:absolute;left:41px;top:293.2px;width:24px;height:1px;background:#494949;"></div>
<svg style="position:absolute;left:46px;top:296px;" width="14" height="13" viewBox="0 0 14 13"><path d="M1 2.2 L9.6 8.3 M1 10.2 L9.6 4.1" stroke="#c8c8c8" stroke-width="1.2"/><circle cx="11.1" cy="3.4" r="1.9" fill="none" stroke="#c8c8c8" stroke-width="1.1"/><circle cx="11.1" cy="9.9" r="1.9" fill="none" stroke="#c8c8c8" stroke-width="1.1"/></svg>
<svg style="position:absolute;left:45.8px;top:313px;" width="14" height="13" viewBox="0 0 14 13"><rect x="0.6" y="6" width="6.5" height="6.3" fill="none" stroke="#c8c8c8" stroke-width="1"/><rect x="3.5" y="2.8" width="9" height="7" fill="none" stroke="#c8c8c8" stroke-width="1"/><path d="M8 7.2 L12 3 M9.5 3H12V5.5" fill="none" stroke="#c8c8c8" stroke-width="0.9"/></svg>
<svg style="position:absolute;left:60.3px;top:322.9px;" width="3" height="3" viewBox="0 0 3 3"><path d="M3 0V3H0Z" fill="#c8c8c8"/></svg>
<div style="position:absolute;left:47px;top:330.5px;width:11px;height:10px;border:1px solid #9a9a9a;background:linear-gradient(to bottom,#bdbdbd,#707070);border-radius:1px;"></div>
<div style="position:absolute;left:47px;top:348px;width:11px;height:10px;border:1px solid #9a9a9a;background:radial-gradient(ellipse at center,#5e5e5e 30%,#b8b8b8 90%);border-radius:1px;"></div>
<div style="position:absolute;left:41px;top:362.6px;width:24px;height:1px;background:#494949;"></div>
<svg style="position:absolute;left:47.8px;top:366.8px;" width="10.5" height="10.8" viewBox="0 0 10.5 10.8"><path d="M0 0H10.3V7.3L7.3 10.6H0Z" fill="#c8c8c8"/><path d="M1.8 2.5H8.5M1.8 4.6H8.5M1.8 6.7H5.5" stroke="#666" stroke-width="0.9"/><path d="M7.3 10.6V7.3H10.3Z" fill="#535353"/><path d="M7.8 9.6V7.8H9.6" fill="none" stroke="#c8c8c8" stroke-width="0.6"/></svg>
<svg style="position:absolute;left:46px;top:382px;" width="12" height="13" viewBox="0 0 12 13"><path d="M8.5 0.8 Q11.5 0.8 11 3.5 L9.2 5.3 L6.8 2.9 Z" fill="#c8c8c8"/><path d="M7.6 3.7 L2.2 9.1 L1.3 11.5 L3.7 10.6 L9.1 5.2" fill="none" stroke="#c8c8c8" stroke-width="1"/></svg>
<svg style="position:absolute;left:60.3px;top:391.9px;" width="3" height="3" viewBox="0 0 3 3"><path d="M3 0V3H0Z" fill="#c8c8c8"/></svg>
<svg style="position:absolute;left:46.8px;top:398.6px;" width="12" height="13" viewBox="0 0 12 13"><rect x="2.6" y="1.6" width="1.9" height="7" rx="0.95" fill="#c8c8c8"/><rect x="4.8" y="0.4" width="1.9" height="8" rx="0.95" fill="#c8c8c8"/><rect x="7" y="1" width="1.9" height="7.5" rx="0.95" fill="#c8c8c8"/><rect x="9.2" y="2.8" width="1.8" height="6" rx="0.9" fill="#c8c8c8"/><path d="M2.6 6.5 H11 V9 Q11 12.6 7.2 12.6 H5.5 Q3.8 12.6 2.6 10.8 L0.4 7.2 Q0.3 5.8 1.6 6.3 L2.8 8Z" fill="#c8c8c8"/></svg>
<svg style="position:absolute;left:46.3px;top:415.5px;" width="12" height="12" viewBox="0 0 12 12"><circle cx="4.8" cy="4.8" r="3.9" fill="none" stroke="#c8c8c8" stroke-width="1.2"/><line x1="7.6" y1="7.6" x2="11.2" y2="11.2" stroke="#c8c8c8" stroke-width="1.6"/></svg>
<div style="position:absolute;left:41px;top:432px;width:24px;height:1px;background:#494949;"></div>
<svg style="position:absolute;left:43.2px;top:434.6px;" width="8" height="8" viewBox="0 0 8 8"><rect x="2.5" y="2.5" width="5" height="5" fill="#222" stroke="#ddd" stroke-width="0.8"/><rect x="0.4" y="0.4" width="4.6" height="4.6" fill="#f4f4f4" stroke="#444" stroke-width="0.5"/><line x1="0.5" y1="5" x2="5" y2="0.5" stroke="#ff2020" stroke-width="0.9"/></svg>
<svg style="position:absolute;left:56.1px;top:436.5px;" width="8" height="8" viewBox="0 0 8 8"><path d="M1 7 Q1 1.5 6.5 1.5" fill="none" stroke="#c8c8c8" stroke-width="0.9"/><path d="M5.3 0.2L7.2 1.5L5.3 2.8Z M-0.3 5.7L1 7.6L2.3 5.7Z" fill="#c8c8c8"/></svg>
<svg style="position:absolute;left:49.1px;top:452.2px;" width="14" height="14" viewBox="0 0 14 14"><rect x="0" y="0" width="14" height="14" fill="#f4f4f4"/><rect x="3.2" y="3.2" width="7.6" height="7.6" fill="#5a5a5a"/><line x1="0.4" y1="13.6" x2="13.6" y2="0.4" stroke="#ff1b1b" stroke-width="1.2"/></svg>
<svg style="position:absolute;left:42.6px;top:446.3px;" width="14" height="13.2" viewBox="0 0 14 13.2"><rect x="0" y="0" width="14" height="13.2" fill="#f4f4f4" stroke="#535353" stroke-width="0.6"/><line x1="0.4" y1="12.8" x2="13.6" y2="0.4" stroke="#ff1b1b" stroke-width="1.2"/></svg>
<svg style="position:absolute;left:44.5px;top:472.2px;" width="7" height="7" viewBox="0 0 7 7"><rect x="0.5" y="0.5" width="6" height="6" rx="1" fill="none" stroke="#c8c8c8" stroke-width="0.9"/><line x1="1.5" y1="3.5" x2="5.5" y2="3.5" stroke="#c8c8c8" stroke-width="0.8"/></svg>
<div class="t" style="left:56px;top:470.6px;font-family:'Liberation Serif',serif;font-weight:bold;font-size:9px;line-height:9px;color:#c8c8c8;">T</div>
<div style="position:absolute;left:43.2px;top:485.2px;width:19.2px;height:14.8px;background:#3b3b3b;border-radius:2px;"></div>
<svg style="position:absolute;left:47.3px;top:487.4px;" width="11.1" height="9.6" viewBox="0 0 11.1 9.6"><rect x="0" y="0" width="11.1" height="9.6" fill="#f4f4f4"/><line x1="0.4" y1="9.2" x2="10.7" y2="0.4" stroke="#ff1b1b" stroke-width="1.1"/></svg>
<svg style="position:absolute;left:59.099999999999994px;top:496.9px;" width="3" height="3" viewBox="0 0 3 3"><path d="M3 0V3H0Z" fill="#c8c8c8"/></svg>
<div style="position:absolute;left:43.2px;top:505px;width:19.2px;height:15.2px;background:#3b3b3b;border-radius:2px;"></div>
<svg style="position:absolute;left:48.8px;top:508.5px;" width="8" height="8.5" viewBox="0 0 8 8.5"><rect x="0.5" y="0.5" width="7" height="7.5" fill="#8a8a8a" stroke="#c8c8c8" stroke-width="0.8"/><rect x="2" y="2" width="1.5" height="1.5" fill="#ddd"/><rect x="4.5" y="2" width="1.5" height="1.5" fill="#ddd"/><rect x="2" y="5" width="1.5" height="1.5" fill="#ddd"/><rect x="4.5" y="5" width="1.5" height="1.5" fill="#ddd"/></svg>
<svg style="position:absolute;left:59.099999999999994px;top:516.9px;" width="3" height="3" viewBox="0 0 3 3"><path d="M3 0V3H0Z" fill="#c8c8c8"/></svg>
<div style="position:absolute;left:926px;top:97px;width:115px;height:496px;background:#535353;"></div>
<svg style="position:absolute;left:1031.5px;top:90.8px" width="6" height="4.5"><polyline points="2.3,0.3 0.6,2.2 2.3,4.1" fill="none" stroke="#aaa" stroke-width="0.8"/><polyline points="5.3,0.3 3.6,2.2 5.3,4.1" fill="none" stroke="#aaa" stroke-width="0.8"/></svg>
<div style="position:absolute;left:926px;top:162.9px;width:115px;height:1.5px;background:#3e3e3e;"></div>
<div style="position:absolute;left:926px;top:211px;width:115px;height:1.5px;background:#3e3e3e;"></div>
<div style="position:absolute;left:926px;top:240.2px;width:115px;height:1.5px;background:#3e3e3e;"></div>
<div style="position:absolute;left:926px;top:268px;width:115px;height:1.5px;background:#3e3e3e;"></div>
<div style="position:absolute;left:976px;top:99.1px;width:14px;height:1.9px;background:#464646;"></div>
<div style="position:absolute;left:976px;top:166.8px;width:14px;height:1.9px;background:#464646;"></div>
<div style="position:absolute;left:976px;top:214.8px;width:14px;height:1.9px;background:#464646;"></div>
<div style="position:absolute;left:976px;top:243.8px;width:14px;height:1.9px;background:#464646;"></div>
<svg style="position:absolute;left:933.7px;top:106.6px;" width="12.6" height="13.4" viewBox="0 0 12.6 13.4"><path d="M0.3 3.5 Q0.3 2 2 2 L5.2 2 L5.2 11.5 L0.3 11.5Z" fill="#c8c8c8"/><path d="M12.3 3.5 Q12.3 2 10.6 2 L7.4 2 L7.4 11.5 L12.3 11.5Z" fill="#c8c8c8"/><line x1="6.3" y1="0" x2="6.3" y2="13.4" stroke="#c8c8c8" stroke-width="1"/><path d="M1.8 4L3.5 2.5M10.8 4L9.1 2.5" stroke="#666" stroke-width="0.6"/></svg>
<svg style="position:absolute;left:933.8px;top:126px;" width="12.5" height="13" viewBox="0 0 12.5 13"><path d="M6.25 0.5 L12 3.8 L6.25 7.1 L0.5 3.8Z" fill="#c8c8c8"/><path d="M0.5 6.8 L6.25 10.1 L12 6.8" fill="none" stroke="#c8c8c8" stroke-width="1.2"/><path d="M0.5 9.3 L6.25 12.6 L12 9.3" fill="none" stroke="#c8c8c8" stroke-width="1.2"/></svg>
<svg style="position:absolute;left:932.8px;top:148.5px;" width="14" height="7" viewBox="0 0 14 7"><rect x="0.6" y="0.8" width="7.4" height="5.4" rx="2.7" fill="none" stroke="#c8c8c8" stroke-width="1.1"/><rect x="6" y="0.8" width="7.4" height="5.4" rx="2.7" fill="none" stroke="#c8c8c8" stroke-width="1.1"/></svg>
<svg style="position:absolute;left:934px;top:176px;" width="11.5" height="9.5" viewBox="0 0 11.5 9.5"><rect x="0" y="0" width="11.5" height="1.2" fill="#c8c8c8"/><rect x="0" y="3.7" width="11.5" height="1.2" fill="#c8c8c8"/><rect x="0" y="7.4" width="11.5" height="2" fill="#c8c8c8"/></svg>
<svg style="position:absolute;left:932.5px;top:195px;" width="13.5" height="10.5" viewBox="0 0 13.5 10.5"><ellipse cx="6.75" cy="5.6" rx="6.1" ry="4.5" fill="#c8c8c8"/><ellipse cx="6.75" cy="5.6" rx="4.6" ry="3.2" fill="#8a8a8a"/><circle cx="3.8" cy="6.4" r="1.1" fill="#c8c8c8"/><circle cx="6.6" cy="7.6" r="1.1" fill="#c8c8c8"/><circle cx="9.6" cy="6.6" r="1.1" fill="#c8c8c8"/><circle cx="8.2" cy="3.3" r="1.3" fill="#535353"/></svg>
<svg style="position:absolute;left:934px;top:224.5px;" width="12" height="9" viewBox="0 0 12 9"><rect x="0" y="0" width="12" height="9" fill="#c8c8c8"/><path d="M0 3H12M0 6H12M4 0V9M8 0V9" stroke="#535353" stroke-width="0.8"/><rect x="1" y="4" width="2" height="1" fill="#535353"/><rect x="5" y="1" width="2" height="1" fill="#535353"/></svg>
<svg style="position:absolute;left:935.5px;top:252px;" width="8" height="11" viewBox="0 0 8 11"><path d="M5.3 0.5 H2.8 Q0.3 0.5 0.3 3 Q0.3 5.5 2.8 5.5 H4.2 V0.5" fill="#c8c8c8"/><path d="M4.6 0.8V11M6.8 0.8V11" stroke="#c8c8c8" stroke-width="1"/></svg>
<div id="f67" class="t" style="left:951.9px;top:109.32px;font-size:8.6px;line-height:8.6px;color:#eeeeee;font-weight:bold;font-family:'Liberation Sans',sans-serif;transform:scaleX(0.9120);transform-origin:0 0;">Pages</div>
<div id="f68" class="t" style="left:951.9px;top:128.72px;font-size:8.6px;line-height:8.6px;color:#eeeeee;font-weight:bold;font-family:'Liberation Sans',sans-serif;transform:scaleX(0.9236);transform-origin:0 0;">Layers</div>
<div id="f69" class="t" style="left:951.9px;top:147.52px;font-size:8.6px;line-height:8.6px;color:#eeeeee;font-weight:bold;font-family:'Liberation Sans',sans-serif;transform:scaleX(0.9442);transform-origin:0 0;">Links</div>
<div id="f70" class="t" style="left:951.6px;top:176.42px;font-size:8.6px;line-height:8.6px;color:#eeeeee;font-weight:bold;font-family:'Liberation Sans',sans-serif;transform:scaleX(0.9495);transform-origin:0 0;">Stroke</div>
<div id="f71" class="t" style="left:951.6px;top:195.92px;font-size:8.6px;line-height:8.6px;color:#eeeeee;font-weight:bold;font-family:'Liberation Sans',sans-serif;transform:scaleX(0.9493);transform-origin:0 0;">Color</div>
<div id="f72" class="t" style="left:951.6px;top:224.52px;font-size:8.6px;line-height:8.6px;color:#eeeeee;font-weight:bold;font-family:'Liberation Sans',sans-serif;transform:scaleX(0.9179);transform-origin:0 0;">Swatches</div>
<div id="f73" class="t" style="left:951.6px;top:253.22px;font-size:8.6px;line-height:8.6px;color:#eeeeee;font-weight:bold;font-family:'Liberation Sans',sans-serif;transform:scaleX(0.9479);transform-origin:0 0;">Paragraph</div>
<div style="position:absolute;left:914.5px;top:273px;width:9.3px;height:17.2px;background:#6b6b6b;border-radius:4.6px;"></div>
<svg style="position:absolute;left:915.8px;top:111.6px;" width="6.5" height="4" viewBox="0 0 6.5 4"><polyline points="0.5,3.3 3.25,0.6 6,3.3" fill="none" stroke="#9a9a9a" stroke-width="0.9"/></svg>
<svg style="position:absolute;left:915.25px;top:573.6px;" width="7.5" height="4.8" viewBox="0 0 7.5 4.8"><polyline points="1,1 3.75,3.8 6.5,1" fill="none" stroke="#9a9a9a" stroke-width="0.9"/></svg>
<svg style="position:absolute;left:75.5px;top:584px;" width="8" height="7" viewBox="0 0 8 7"><rect x="0" y="0.5" width="1.6" height="6" fill="#c8c8c8"/><path d="M7.5 0.5V6.5L2.2 3.5Z" fill="#c8c8c8"/></svg>
<svg style="position:absolute;left:91.5px;top:584px;" width="5" height="7" viewBox="0 0 5 7"><path d="M4.5 0.5V6.5L0.3 3.5Z" fill="#c8c8c8"/></svg>
<div style="position:absolute;left:104.3px;top:581.7px;width:61.4px;height:9.5px;border:1px solid #6a6a6a;border-radius:2px;background:#474747;"></div>
<div style="position:absolute;left:154.3px;top:582.7px;width:1px;height:9.5px;background:#6a6a6a;"></div>
<svg style="position:absolute;left:156.75px;top:584.4px;" width="7.5" height="4.8" viewBox="0 0 7.5 4.8"><polyline points="1,1 3.75,3.8 6.5,1" fill="none" stroke="#c8c8c8" stroke-width="1.1"/></svg>
<svg style="position:absolute;left:176.3px;top:584px;" width="5" height="7" viewBox="0 0 5 7"><path d="M0.5 0.5V6.5L4.7 3.5Z" fill="#c8c8c8"/></svg>
<svg style="position:absolute;left:188.3px;top:584px;" width="8" height="7" viewBox="0 0 8 7"><path d="M0.5 0.5V6.5L5 3.5Z" fill="#c8c8c8"/><rect x="5.4" y="0.5" width="1.6" height="6" fill="#c8c8c8"/></svg>
<svg style="position:absolute;left:205.5px;top:582.2px;" width="13" height="10" viewBox="0 0 13 10"><circle cx="5.5" cy="5" r="3.9" fill="none" stroke="#c8c8c8" stroke-width="1.5"/><path d="M4.2 8V3.2H6.6L7.8 4.4V5.5" fill="none" stroke="#535353" stroke-width="1"/><path d="M11 8.3H13L12 9.5Z" fill="#c8c8c8"/></svg>
<div style="position:absolute;left:301px;top:582px;width:1px;height:10px;background:#555;"></div>
<svg style="position:absolute;left:298.95px;top:584.4px;" width="7.5" height="4.8" viewBox="0 0 7.5 4.8"><polyline points="1,1 3.75,3.8 6.5,1" fill="none" stroke="#c8c8c8" stroke-width="1.1"/></svg>
<div style="position:absolute;left:316.5px;top:583.5px;width:7px;height:7px;border-radius:50%;background:#1fb84a;"></div>
<svg style="position:absolute;left:370.25px;top:584.4px;" width="7.5" height="4.8" viewBox="0 0 7.5 4.8"><polyline points="1,1 3.75,3.8 6.5,1" fill="none" stroke="#c8c8c8" stroke-width="1.1"/></svg>
<div style="position:absolute;left:380px;top:581px;width:1px;height:12px;background:#444;"></div>
<svg style="position:absolute;left:385px;top:584px;" width="4" height="6" viewBox="0 0 4 6"><polyline points="3.5,0.5 0.8,3 3.5,5.5" fill="none" stroke="#a0a0a0" stroke-width="1"/></svg>
<div style="position:absolute;left:475px;top:582.2px;width:329px;height:9.8px;background:#656565;border-radius:5px;"></div>
<svg style="position:absolute;left:890.8px;top:584px;" width="4" height="6" viewBox="0 0 4 6"><polyline points="0.5,0.5 3.2,3 0.5,5.5" fill="none" stroke="#8a8a8a" stroke-width="0.9"/></svg>
<div style="position:absolute;left:896px;top:581px;width:1px;height:12px;background:#474747;"></div>
<svg style="position:absolute;left:901px;top:583.8px;" width="11.5" height="8" viewBox="0 0 11.5 8"><rect x="0.6" y="0.6" width="10.3" height="6.8" fill="none" stroke="#c8c8c8" stroke-width="1"/><line x1="5.75" y1="0.6" x2="5.75" y2="7.4" stroke="#c8c8c8" stroke-width="1"/><line x1="0.6" y1="6.2" x2="10.9" y2="6.2" stroke="#c8c8c8" stroke-width="0.7"/></svg>
<svg style="position:absolute;left:916px;top:584px;" width="8" height="8" viewBox="0 0 8 8"><line x1="7.5" y1="0.5" x2="0.5" y2="7.5" stroke="#5a5a5a" stroke-width="0.8"/></svg>
<div id="f74" class="t" style="left:228.3px;top:583.21px;font-size:9.2px;line-height:9.2px;color:#e6e6e6;font-weight:normal;font-family:'Liberation Sans',sans-serif;transform:scaleX(0.8350);transform-origin:0 0;-webkit-text-stroke:0.15px #e6e6e6;">[Basic] (working)</div>
<div id="f75" class="t" style="left:327.7px;top:583.21px;font-size:9.2px;line-height:9.2px;color:#e6e6e6;font-weight:normal;font-family:'Liberation Sans',sans-serif;transform:scaleX(0.8251);transform-origin:0 0;-webkit-text-stroke:0.15px #e6e6e6;">No errors</div>
<div id="f76" class="t" style="left:106.9px;top:582.47px;font-size:9.6px;line-height:9.6px;color:#ececec;font-weight:normal;font-family:'Liberation Sans',sans-serif;transform:scaleX(0.7403);transform-origin:0 0;-webkit-text-stroke:0.1px #ececec;">34</div>
</body></html>
